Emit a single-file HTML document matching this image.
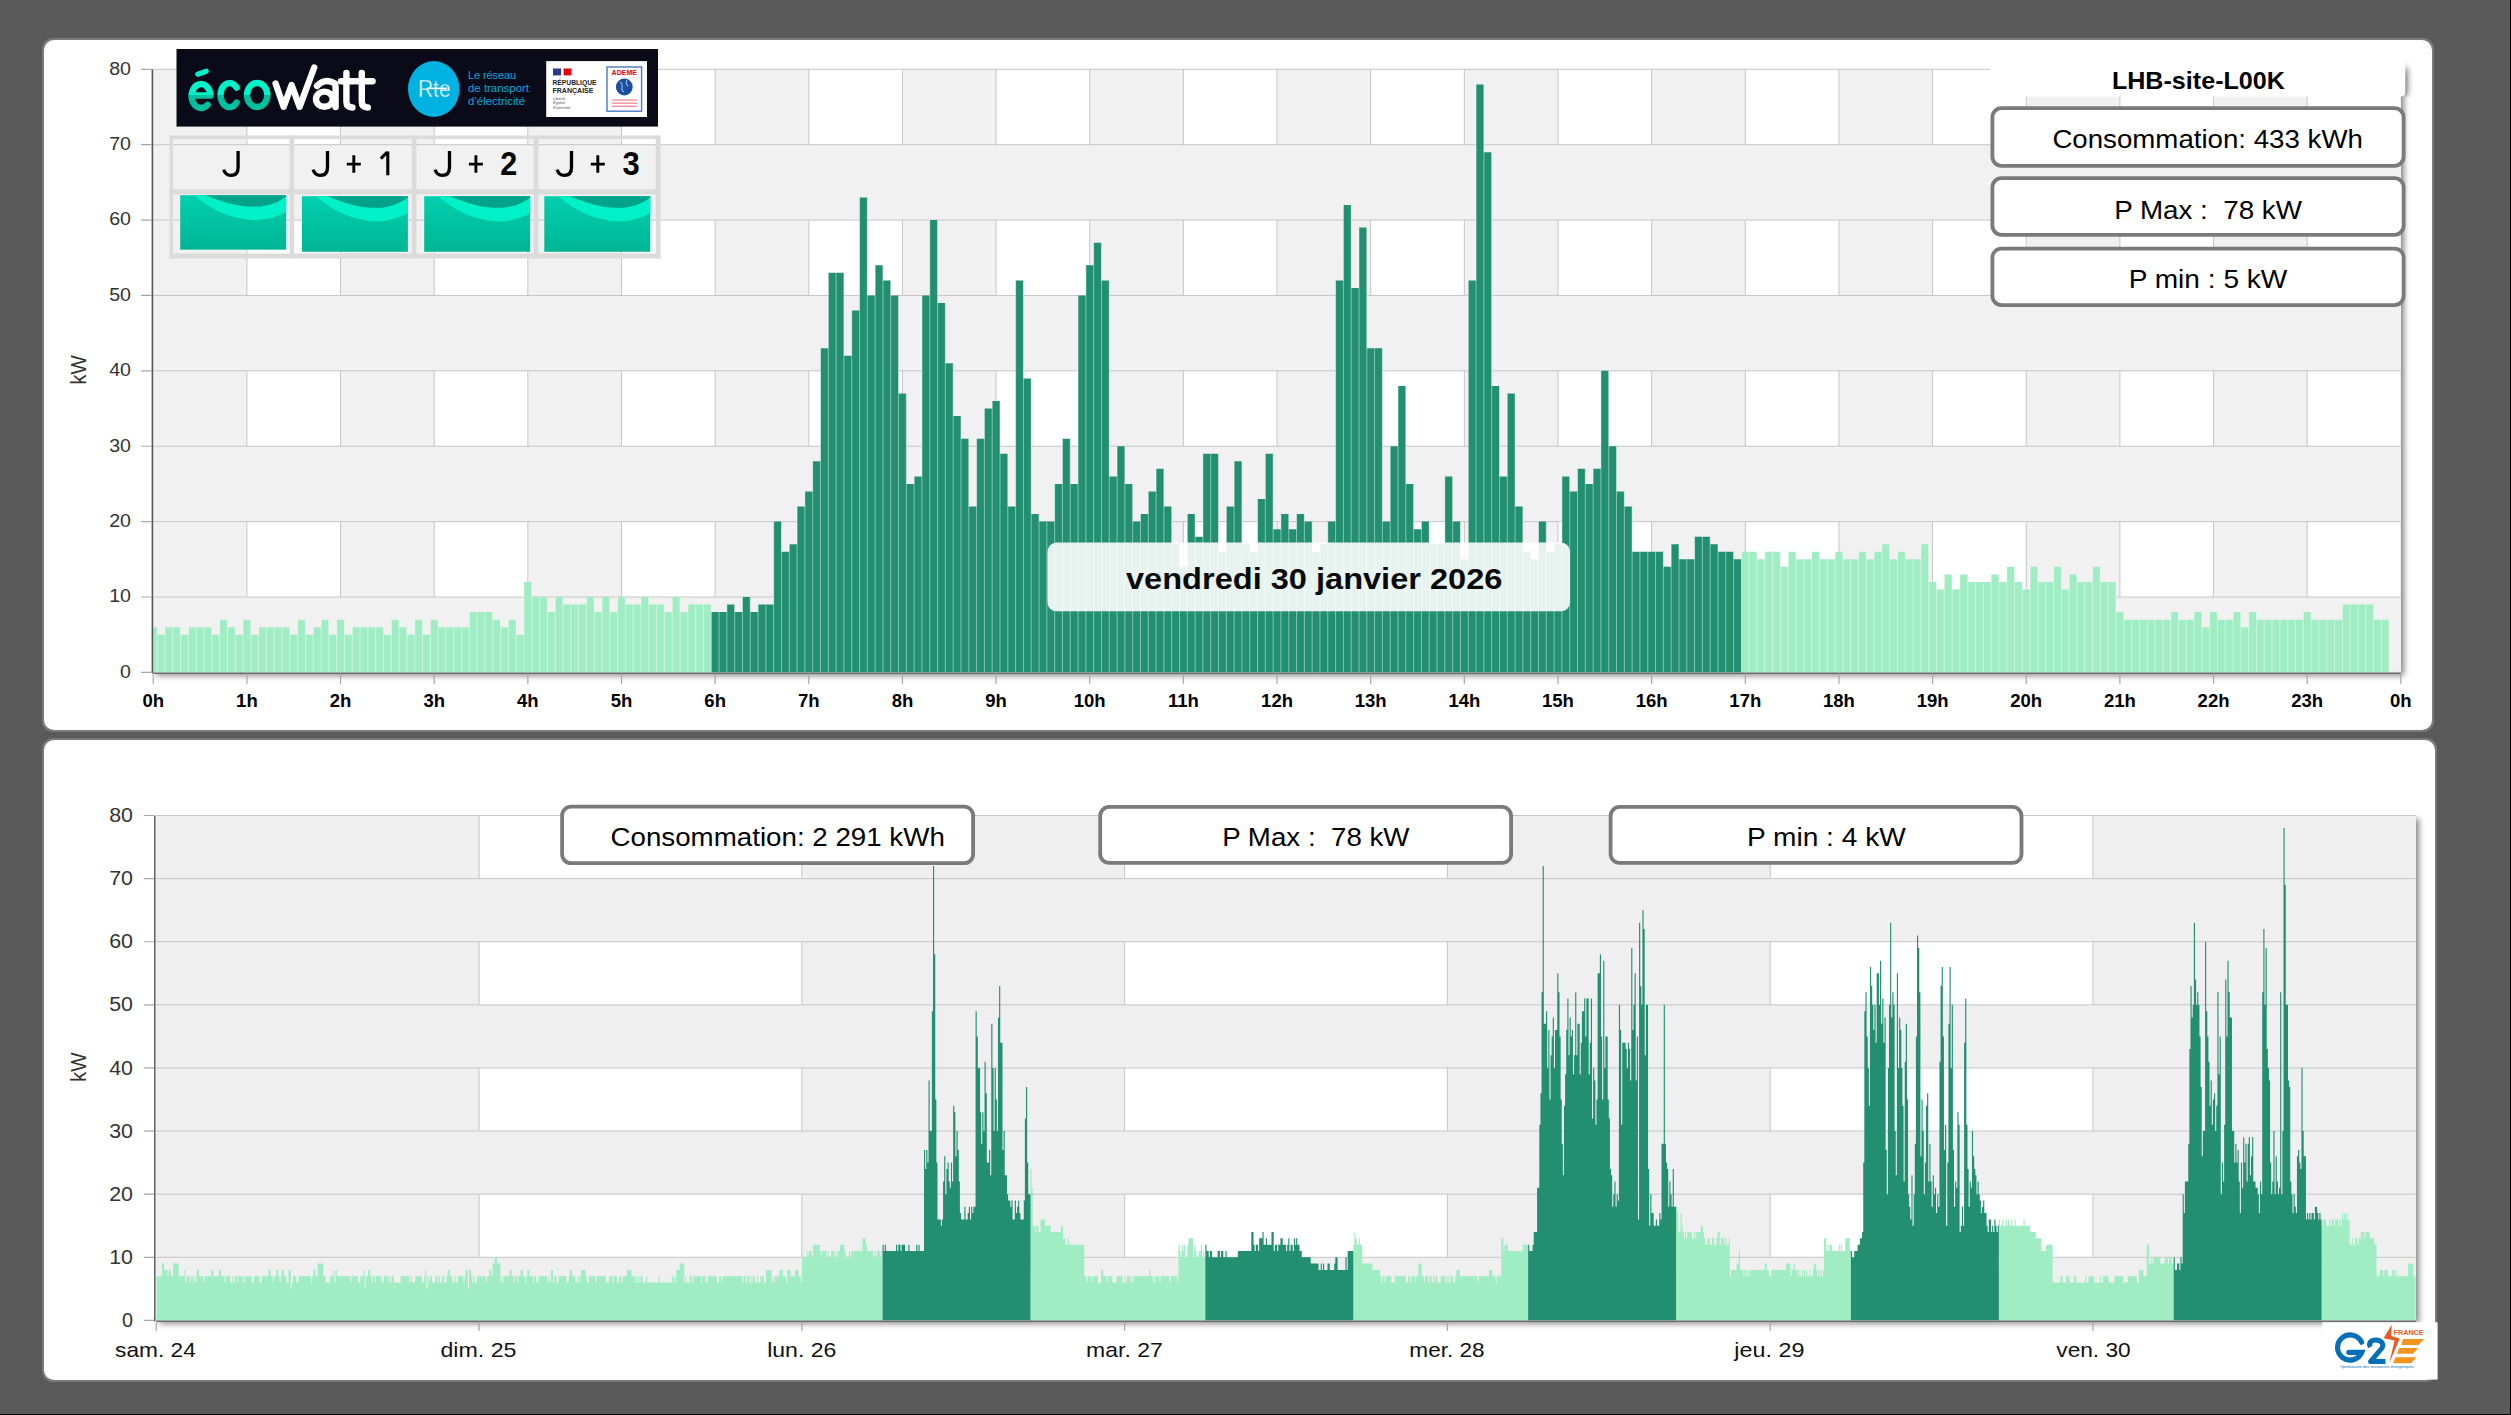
<!DOCTYPE html><html><head><meta charset="utf-8"><style>html,body{margin:0;padding:0;background:#5a5a5a;width:2511px;height:1415px;overflow:hidden}svg{display:block}text{font-family:'Liberation Sans',sans-serif}</style></head><body>
<svg width="2511" height="1415" viewBox="0 0 2511 1415">
<defs>
<filter id="sh" x="-5%" y="-5%" width="110%" height="110%"><feGaussianBlur stdDeviation="3.2"/></filter>
<filter id="sh2" x="-10%" y="-60%" width="120%" height="220%"><feGaussianBlur stdDeviation="3.2"/></filter>
<clipPath id="c1"><rect x="153.25" y="69.3" width="2247.6" height="603.1"/></clipPath>
<clipPath id="c2"><rect x="156.3" y="815.5" width="2259.46" height="504.9"/></clipPath>
<linearGradient id="eco" x1="0" y1="0" x2="0" y2="1"><stop offset="0" stop-color="#00f2c9"/><stop offset="0.58" stop-color="#00f2c9"/><stop offset="0.58" stop-color="#00c2a2"/><stop offset="1" stop-color="#00c2a2"/></linearGradient>
<linearGradient id="wavebg" x1="0" y1="0" x2="0" y2="1"><stop offset="0" stop-color="#00d0ae"/><stop offset="1" stop-color="#00b594"/></linearGradient>
</defs>
<rect x="0" y="0" width="2511" height="1415" fill="#5a5a5a"/>
<rect x="2510" y="0" width="1" height="1415" fill="#000"/>
<rect x="0" y="1414" width="2511" height="1" fill="#000"/>
<rect x="42" y="38" width="2392" height="694" rx="11" fill="#7a7a7a"/>
<rect x="44" y="40" width="2388" height="690" rx="10" fill="#fff"/>
<rect x="42" y="738" width="2395" height="644" rx="11" fill="#7a7a7a"/>
<rect x="44" y="740" width="2391" height="640" rx="10" fill="#fff"/>
<clipPath id="sc1"><rect x="153.25" y="69.3" width="2272.6" height="628.1"/></clipPath>
<g clip-path="url(#sc1)"><rect x="156.25" y="72.3" width="2247.6" height="603.1" fill="#000" opacity="0.5" filter="url(#sh)"/></g>
<rect x="153.25" y="69.3" width="2247.6" height="603.1" fill="#fff"/>
<rect x="153.25" y="69.3" width="93.65" height="603.1" fill="#f1f1f1"/>
<rect x="340.55" y="69.3" width="93.65" height="603.1" fill="#f1f1f1"/>
<rect x="527.85" y="69.3" width="93.65" height="603.1" fill="#f1f1f1"/>
<rect x="715.15" y="69.3" width="93.65" height="603.1" fill="#f1f1f1"/>
<rect x="902.45" y="69.3" width="93.65" height="603.1" fill="#f1f1f1"/>
<rect x="1089.75" y="69.3" width="93.65" height="603.1" fill="#f1f1f1"/>
<rect x="1277.05" y="69.3" width="93.65" height="603.1" fill="#f1f1f1"/>
<rect x="1464.35" y="69.3" width="93.65" height="603.1" fill="#f1f1f1"/>
<rect x="1651.65" y="69.3" width="93.65" height="603.1" fill="#f1f1f1"/>
<rect x="1838.95" y="69.3" width="93.65" height="603.1" fill="#f1f1f1"/>
<rect x="2026.25" y="69.3" width="93.65" height="603.1" fill="#f1f1f1"/>
<rect x="2213.55" y="69.3" width="93.65" height="603.1" fill="#f1f1f1"/>
<path d="M246.9 69.3V672.4M340.55 69.3V672.4M434.2 69.3V672.4M527.85 69.3V672.4M621.5 69.3V672.4M715.15 69.3V672.4M808.8 69.3V672.4M902.45 69.3V672.4M996.1 69.3V672.4M1089.75 69.3V672.4M1183.4 69.3V672.4M1277.05 69.3V672.4M1370.7 69.3V672.4M1464.35 69.3V672.4M1558 69.3V672.4M1651.65 69.3V672.4M1745.3 69.3V672.4M1838.95 69.3V672.4M1932.6 69.3V672.4M2026.25 69.3V672.4M2119.9 69.3V672.4M2213.55 69.3V672.4M2307.2 69.3V672.4" stroke="#c6c6c6" stroke-width="1" fill="none"/>
<rect x="153.25" y="597.01" width="2247.6" height="75.39" fill="#f1f1f1"/>
<rect x="153.25" y="446.24" width="2247.6" height="75.39" fill="#f1f1f1"/>
<rect x="153.25" y="295.46" width="2247.6" height="75.39" fill="#f1f1f1"/>
<rect x="153.25" y="144.69" width="2247.6" height="75.39" fill="#f1f1f1"/>
<path d="M153.25 672.4H2400.85M153.25 597.01H2400.85M153.25 521.62H2400.85M153.25 446.24H2400.85M153.25 370.85H2400.85M153.25 295.46H2400.85M153.25 220.07H2400.85M153.25 144.69H2400.85M153.25 69.3H2400.85" stroke="#c6c6c6" stroke-width="1" fill="none"/>
<g clip-path="url(#c1)">
<path d="M149.35 672.4h7.8v-45.23h-7.8zM157.15 672.4h7.8v-37.69h-7.8zM164.96 672.4h7.8v-45.23h-7.8zM172.76 672.4h7.8v-45.23h-7.8zM180.56 672.4h7.8v-37.69h-7.8zM188.37 672.4h7.8v-45.23h-7.8zM196.17 672.4h7.8v-45.23h-7.8zM203.98 672.4h7.8v-45.23h-7.8zM211.78 672.4h7.8v-37.69h-7.8zM219.59 672.4h7.8v-52.77h-7.8zM227.39 672.4h7.8v-45.23h-7.8zM235.19 672.4h7.8v-37.69h-7.8zM243 672.4h7.8v-52.77h-7.8zM250.8 672.4h7.8v-37.69h-7.8zM258.61 672.4h7.8v-45.23h-7.8zM266.41 672.4h7.8v-45.23h-7.8zM274.21 672.4h7.8v-45.23h-7.8zM282.02 672.4h7.8v-45.23h-7.8zM289.82 672.4h7.8v-37.69h-7.8zM297.63 672.4h7.8v-52.77h-7.8zM305.43 672.4h7.8v-37.69h-7.8zM313.24 672.4h7.8v-45.23h-7.8zM321.04 672.4h7.8v-52.77h-7.8zM328.84 672.4h7.8v-37.69h-7.8zM336.65 672.4h7.8v-52.77h-7.8zM344.45 672.4h7.8v-37.69h-7.8zM352.26 672.4h7.8v-45.23h-7.8zM360.06 672.4h7.8v-45.23h-7.8zM367.86 672.4h7.8v-45.23h-7.8zM375.67 672.4h7.8v-45.23h-7.8zM383.47 672.4h7.8v-37.69h-7.8zM391.28 672.4h7.8v-52.77h-7.8zM399.08 672.4h7.8v-45.23h-7.8zM406.89 672.4h7.8v-37.69h-7.8zM414.69 672.4h7.8v-52.77h-7.8zM422.49 672.4h7.8v-37.69h-7.8zM430.3 672.4h7.8v-52.77h-7.8zM438.1 672.4h7.8v-45.23h-7.8zM445.91 672.4h7.8v-45.23h-7.8zM453.71 672.4h7.8v-45.23h-7.8zM461.51 672.4h7.8v-45.23h-7.8zM469.32 672.4h7.8v-60.31h-7.8zM477.12 672.4h7.8v-60.31h-7.8zM484.93 672.4h7.8v-60.31h-7.8zM492.73 672.4h7.8v-52.77h-7.8zM500.54 672.4h7.8v-45.23h-7.8zM508.34 672.4h7.8v-52.77h-7.8zM516.14 672.4h7.8v-37.69h-7.8zM523.95 672.4h7.8v-90.47h-7.8zM531.75 672.4h7.8v-75.39h-7.8zM539.56 672.4h7.8v-75.39h-7.8zM547.36 672.4h7.8v-60.31h-7.8zM555.16 672.4h7.8v-75.39h-7.8zM562.97 672.4h7.8v-67.85h-7.8zM570.77 672.4h7.8v-67.85h-7.8zM578.58 672.4h7.8v-67.85h-7.8zM586.38 672.4h7.8v-75.39h-7.8zM594.19 672.4h7.8v-60.31h-7.8zM601.99 672.4h7.8v-75.39h-7.8zM609.79 672.4h7.8v-60.31h-7.8zM617.6 672.4h7.8v-75.39h-7.8zM625.4 672.4h7.8v-67.85h-7.8zM633.21 672.4h7.8v-67.85h-7.8zM641.01 672.4h7.8v-75.39h-7.8zM648.81 672.4h7.8v-67.85h-7.8zM656.62 672.4h7.8v-67.85h-7.8zM664.42 672.4h7.8v-60.31h-7.8zM672.23 672.4h7.8v-75.39h-7.8zM680.03 672.4h7.8v-60.31h-7.8zM687.84 672.4h7.8v-67.85h-7.8zM695.64 672.4h7.8v-67.85h-7.8zM703.44 672.4h7.8v-67.85h-7.8zM1741.4 672.4h7.8v-120.62h-7.8zM1749.2 672.4h7.8v-120.62h-7.8zM1757.01 672.4h7.8v-113.08h-7.8zM1764.81 672.4h7.8v-120.62h-7.8zM1772.61 672.4h7.8v-120.62h-7.8zM1780.42 672.4h7.8v-105.54h-7.8zM1788.22 672.4h7.8v-120.62h-7.8zM1796.03 672.4h7.8v-113.08h-7.8zM1803.83 672.4h7.8v-113.08h-7.8zM1811.64 672.4h7.8v-120.62h-7.8zM1819.44 672.4h7.8v-113.08h-7.8zM1827.24 672.4h7.8v-113.08h-7.8zM1835.05 672.4h7.8v-120.62h-7.8zM1842.85 672.4h7.8v-113.08h-7.8zM1850.66 672.4h7.8v-113.08h-7.8zM1858.46 672.4h7.8v-120.62h-7.8zM1866.26 672.4h7.8v-113.08h-7.8zM1874.07 672.4h7.8v-120.62h-7.8zM1881.87 672.4h7.8v-128.16h-7.8zM1889.68 672.4h7.8v-113.08h-7.8zM1897.48 672.4h7.8v-120.62h-7.8zM1905.29 672.4h7.8v-113.08h-7.8zM1913.09 672.4h7.8v-113.08h-7.8zM1920.89 672.4h7.8v-128.16h-7.8zM1928.7 672.4h7.8v-90.47h-7.8zM1936.5 672.4h7.8v-82.93h-7.8zM1944.31 672.4h7.8v-98h-7.8zM1952.11 672.4h7.8v-82.93h-7.8zM1959.91 672.4h7.8v-98h-7.8zM1967.72 672.4h7.8v-90.47h-7.8zM1975.52 672.4h7.8v-90.47h-7.8zM1983.33 672.4h7.8v-90.47h-7.8zM1991.13 672.4h7.8v-98h-7.8zM1998.94 672.4h7.8v-90.47h-7.8zM2006.74 672.4h7.8v-105.54h-7.8zM2014.54 672.4h7.8v-90.47h-7.8zM2022.35 672.4h7.8v-82.93h-7.8zM2030.15 672.4h7.8v-105.54h-7.8zM2037.96 672.4h7.8v-90.47h-7.8zM2045.76 672.4h7.8v-90.47h-7.8zM2053.56 672.4h7.8v-105.54h-7.8zM2061.37 672.4h7.8v-82.93h-7.8zM2069.17 672.4h7.8v-98h-7.8zM2076.98 672.4h7.8v-90.47h-7.8zM2084.78 672.4h7.8v-90.47h-7.8zM2092.59 672.4h7.8v-105.54h-7.8zM2100.39 672.4h7.8v-90.47h-7.8zM2108.19 672.4h7.8v-90.47h-7.8zM2116 672.4h7.8v-60.31h-7.8zM2123.8 672.4h7.8v-52.77h-7.8zM2131.61 672.4h7.8v-52.77h-7.8zM2139.41 672.4h7.8v-52.77h-7.8zM2147.21 672.4h7.8v-52.77h-7.8zM2155.02 672.4h7.8v-52.77h-7.8zM2162.82 672.4h7.8v-52.77h-7.8zM2170.63 672.4h7.8v-60.31h-7.8zM2178.43 672.4h7.8v-52.77h-7.8zM2186.24 672.4h7.8v-52.77h-7.8zM2194.04 672.4h7.8v-60.31h-7.8zM2201.84 672.4h7.8v-45.23h-7.8zM2209.65 672.4h7.8v-60.31h-7.8zM2217.45 672.4h7.8v-52.77h-7.8zM2225.26 672.4h7.8v-52.77h-7.8zM2233.06 672.4h7.8v-60.31h-7.8zM2240.86 672.4h7.8v-45.23h-7.8zM2248.67 672.4h7.8v-60.31h-7.8zM2256.47 672.4h7.8v-52.77h-7.8zM2264.28 672.4h7.8v-52.77h-7.8zM2272.08 672.4h7.8v-52.77h-7.8zM2279.89 672.4h7.8v-52.77h-7.8zM2287.69 672.4h7.8v-52.77h-7.8zM2295.49 672.4h7.8v-52.77h-7.8zM2303.3 672.4h7.8v-60.31h-7.8zM2311.1 672.4h7.8v-52.77h-7.8zM2318.91 672.4h7.8v-52.77h-7.8zM2326.71 672.4h7.8v-52.77h-7.8zM2334.51 672.4h7.8v-52.77h-7.8zM2342.32 672.4h7.8v-67.85h-7.8zM2350.12 672.4h7.8v-67.85h-7.8zM2357.93 672.4h7.8v-67.85h-7.8zM2365.73 672.4h7.8v-67.85h-7.8zM2373.54 672.4h7.8v-52.77h-7.8zM2381.34 672.4h7.8v-52.77h-7.8z" fill="#a0edc3"/>
<path d="M711.25 672.4h7.8v-60.31h-7.8zM719.05 672.4h7.8v-60.31h-7.8zM726.86 672.4h7.8v-67.85h-7.8zM734.66 672.4h7.8v-60.31h-7.8zM742.46 672.4h7.8v-75.39h-7.8zM750.27 672.4h7.8v-60.31h-7.8zM758.07 672.4h7.8v-67.85h-7.8zM765.88 672.4h7.8v-67.85h-7.8zM773.68 672.4h7.8v-150.78h-7.8zM781.49 672.4h7.8v-120.62h-7.8zM789.29 672.4h7.8v-128.16h-7.8zM797.09 672.4h7.8v-165.85h-7.8zM804.9 672.4h7.8v-180.93h-7.8zM812.7 672.4h7.8v-211.09h-7.8zM820.51 672.4h7.8v-324.17h-7.8zM828.31 672.4h7.8v-399.55h-7.8zM836.11 672.4h7.8v-399.55h-7.8zM843.92 672.4h7.8v-316.63h-7.8zM851.72 672.4h7.8v-361.86h-7.8zM859.53 672.4h7.8v-474.94h-7.8zM867.33 672.4h7.8v-376.94h-7.8zM875.14 672.4h7.8v-407.09h-7.8zM882.94 672.4h7.8v-392.01h-7.8zM890.74 672.4h7.8v-376.94h-7.8zM898.55 672.4h7.8v-278.93h-7.8zM906.35 672.4h7.8v-188.47h-7.8zM914.16 672.4h7.8v-196.01h-7.8zM921.96 672.4h7.8v-376.94h-7.8zM929.76 672.4h7.8v-452.33h-7.8zM937.57 672.4h7.8v-369.4h-7.8zM945.37 672.4h7.8v-309.09h-7.8zM953.18 672.4h7.8v-256.32h-7.8zM960.98 672.4h7.8v-233.7h-7.8zM968.79 672.4h7.8v-165.85h-7.8zM976.59 672.4h7.8v-233.7h-7.8zM984.39 672.4h7.8v-263.86h-7.8zM992.2 672.4h7.8v-271.39h-7.8zM1000 672.4h7.8v-218.62h-7.8zM1007.81 672.4h7.8v-165.85h-7.8zM1015.61 672.4h7.8v-392.01h-7.8zM1023.41 672.4h7.8v-294.01h-7.8zM1031.22 672.4h7.8v-158.31h-7.8zM1039.02 672.4h7.8v-150.78h-7.8zM1046.83 672.4h7.8v-150.78h-7.8zM1054.63 672.4h7.8v-188.47h-7.8zM1062.44 672.4h7.8v-233.7h-7.8zM1070.24 672.4h7.8v-188.47h-7.8zM1078.04 672.4h7.8v-376.94h-7.8zM1085.85 672.4h7.8v-407.09h-7.8zM1093.65 672.4h7.8v-429.71h-7.8zM1101.46 672.4h7.8v-392.01h-7.8zM1109.26 672.4h7.8v-196.01h-7.8zM1117.06 672.4h7.8v-226.16h-7.8zM1124.87 672.4h7.8v-188.47h-7.8zM1132.67 672.4h7.8v-150.78h-7.8zM1140.48 672.4h7.8v-158.31h-7.8zM1148.28 672.4h7.8v-180.93h-7.8zM1156.09 672.4h7.8v-203.55h-7.8zM1163.89 672.4h7.8v-165.85h-7.8zM1171.69 672.4h7.8v-128.16h-7.8zM1179.5 672.4h7.8v-105.54h-7.8zM1187.3 672.4h7.8v-158.31h-7.8zM1195.11 672.4h7.8v-135.7h-7.8zM1202.91 672.4h7.8v-218.62h-7.8zM1210.71 672.4h7.8v-218.62h-7.8zM1218.52 672.4h7.8v-120.62h-7.8zM1226.32 672.4h7.8v-165.85h-7.8zM1234.13 672.4h7.8v-211.09h-7.8zM1241.93 672.4h7.8v-128.16h-7.8zM1249.74 672.4h7.8v-120.62h-7.8zM1257.54 672.4h7.8v-173.39h-7.8zM1265.34 672.4h7.8v-218.62h-7.8zM1273.15 672.4h7.8v-143.24h-7.8zM1280.95 672.4h7.8v-158.31h-7.8zM1288.76 672.4h7.8v-143.24h-7.8zM1296.56 672.4h7.8v-158.31h-7.8zM1304.36 672.4h7.8v-150.78h-7.8zM1312.17 672.4h7.8v-120.62h-7.8zM1319.97 672.4h7.8v-128.16h-7.8zM1327.78 672.4h7.8v-150.78h-7.8zM1335.58 672.4h7.8v-392.01h-7.8zM1343.39 672.4h7.8v-467.4h-7.8zM1351.19 672.4h7.8v-384.48h-7.8zM1358.99 672.4h7.8v-444.79h-7.8zM1366.8 672.4h7.8v-324.17h-7.8zM1374.6 672.4h7.8v-324.17h-7.8zM1382.41 672.4h7.8v-150.78h-7.8zM1390.21 672.4h7.8v-226.16h-7.8zM1398.01 672.4h7.8v-286.47h-7.8zM1405.82 672.4h7.8v-188.47h-7.8zM1413.62 672.4h7.8v-143.24h-7.8zM1421.43 672.4h7.8v-150.78h-7.8zM1429.23 672.4h7.8v-128.16h-7.8zM1437.04 672.4h7.8v-128.16h-7.8zM1444.84 672.4h7.8v-196.01h-7.8zM1452.64 672.4h7.8v-150.78h-7.8zM1460.45 672.4h7.8v-113.08h-7.8zM1468.25 672.4h7.8v-392.01h-7.8zM1476.06 672.4h7.8v-588.02h-7.8zM1483.86 672.4h7.8v-520.17h-7.8zM1491.66 672.4h7.8v-286.47h-7.8zM1499.47 672.4h7.8v-196.01h-7.8zM1507.27 672.4h7.8v-278.93h-7.8zM1515.08 672.4h7.8v-165.85h-7.8zM1522.88 672.4h7.8v-120.62h-7.8zM1530.69 672.4h7.8v-113.08h-7.8zM1538.49 672.4h7.8v-150.78h-7.8zM1546.29 672.4h7.8v-120.62h-7.8zM1554.1 672.4h7.8v-128.16h-7.8zM1561.9 672.4h7.8v-196.01h-7.8zM1569.71 672.4h7.8v-180.93h-7.8zM1577.51 672.4h7.8v-203.55h-7.8zM1585.31 672.4h7.8v-188.47h-7.8zM1593.12 672.4h7.8v-203.55h-7.8zM1600.92 672.4h7.8v-301.55h-7.8zM1608.73 672.4h7.8v-226.16h-7.8zM1616.53 672.4h7.8v-180.93h-7.8zM1624.34 672.4h7.8v-165.85h-7.8zM1632.14 672.4h7.8v-120.62h-7.8zM1639.94 672.4h7.8v-120.62h-7.8zM1647.75 672.4h7.8v-120.62h-7.8zM1655.55 672.4h7.8v-120.62h-7.8zM1663.36 672.4h7.8v-105.54h-7.8zM1671.16 672.4h7.8v-128.16h-7.8zM1678.96 672.4h7.8v-113.08h-7.8zM1686.77 672.4h7.8v-113.08h-7.8zM1694.57 672.4h7.8v-135.7h-7.8zM1702.38 672.4h7.8v-135.7h-7.8zM1710.18 672.4h7.8v-128.16h-7.8zM1717.99 672.4h7.8v-120.62h-7.8zM1725.79 672.4h7.8v-120.62h-7.8zM1733.59 672.4h7.8v-113.08h-7.8z" fill="#228f70"/>
<path d="M157.15 672.4v-45.23M164.96 672.4v-45.23M172.76 672.4v-45.23M180.56 672.4v-45.23M188.37 672.4v-45.23M196.17 672.4v-45.23M203.98 672.4v-45.23M211.78 672.4v-45.23M219.59 672.4v-52.77M227.39 672.4v-52.77M235.19 672.4v-45.23M243 672.4v-52.77M250.8 672.4v-52.77M258.61 672.4v-45.23M266.41 672.4v-45.23M274.21 672.4v-45.23M282.02 672.4v-45.23M289.82 672.4v-45.23M297.63 672.4v-52.77M305.43 672.4v-52.77M313.24 672.4v-45.23M321.04 672.4v-52.77M328.84 672.4v-52.77M336.65 672.4v-52.77M344.45 672.4v-52.77M352.26 672.4v-45.23M360.06 672.4v-45.23M367.86 672.4v-45.23M375.67 672.4v-45.23M383.47 672.4v-45.23M391.28 672.4v-52.77M399.08 672.4v-52.77M406.89 672.4v-45.23M414.69 672.4v-52.77M422.49 672.4v-52.77M430.3 672.4v-52.77M438.1 672.4v-52.77M445.91 672.4v-45.23M453.71 672.4v-45.23M461.51 672.4v-45.23M469.32 672.4v-60.31M477.12 672.4v-60.31M484.93 672.4v-60.31M492.73 672.4v-60.31M500.54 672.4v-52.77M508.34 672.4v-52.77M516.14 672.4v-52.77M523.95 672.4v-90.47M531.75 672.4v-90.47M539.56 672.4v-75.39M547.36 672.4v-75.39M555.16 672.4v-75.39M562.97 672.4v-75.39M570.77 672.4v-67.85M578.58 672.4v-67.85M586.38 672.4v-75.39M594.19 672.4v-75.39M601.99 672.4v-75.39M609.79 672.4v-75.39M617.6 672.4v-75.39M625.4 672.4v-75.39M633.21 672.4v-67.85M641.01 672.4v-75.39M648.81 672.4v-75.39M656.62 672.4v-67.85M664.42 672.4v-67.85M672.23 672.4v-75.39M680.03 672.4v-75.39M687.84 672.4v-67.85M695.64 672.4v-67.85M703.44 672.4v-67.85M711.25 672.4v-67.85M1749.2 672.4v-120.62M1757.01 672.4v-120.62M1764.81 672.4v-120.62M1772.61 672.4v-120.62M1780.42 672.4v-120.62M1788.22 672.4v-120.62M1796.03 672.4v-120.62M1803.83 672.4v-113.08M1811.64 672.4v-120.62M1819.44 672.4v-120.62M1827.24 672.4v-113.08M1835.05 672.4v-120.62M1842.85 672.4v-120.62M1850.66 672.4v-113.08M1858.46 672.4v-120.62M1866.26 672.4v-120.62M1874.07 672.4v-120.62M1881.87 672.4v-128.16M1889.68 672.4v-128.16M1897.48 672.4v-120.62M1905.29 672.4v-120.62M1913.09 672.4v-113.08M1920.89 672.4v-128.16M1928.7 672.4v-128.16M1936.5 672.4v-90.47M1944.31 672.4v-98M1952.11 672.4v-98M1959.91 672.4v-98M1967.72 672.4v-98M1975.52 672.4v-90.47M1983.33 672.4v-90.47M1991.13 672.4v-98M1998.94 672.4v-98M2006.74 672.4v-105.54M2014.54 672.4v-105.54M2022.35 672.4v-90.47M2030.15 672.4v-105.54M2037.96 672.4v-105.54M2045.76 672.4v-90.47M2053.56 672.4v-105.54M2061.37 672.4v-105.54M2069.17 672.4v-98M2076.98 672.4v-98M2084.78 672.4v-90.47M2092.59 672.4v-105.54M2100.39 672.4v-105.54M2108.19 672.4v-90.47M2116 672.4v-90.47M2123.8 672.4v-60.31M2131.61 672.4v-52.77M2139.41 672.4v-52.77M2147.21 672.4v-52.77M2155.02 672.4v-52.77M2162.82 672.4v-52.77M2170.63 672.4v-60.31M2178.43 672.4v-60.31M2186.24 672.4v-52.77M2194.04 672.4v-60.31M2201.84 672.4v-60.31M2209.65 672.4v-60.31M2217.45 672.4v-60.31M2225.26 672.4v-52.77M2233.06 672.4v-60.31M2240.86 672.4v-60.31M2248.67 672.4v-60.31M2256.47 672.4v-60.31M2264.28 672.4v-52.77M2272.08 672.4v-52.77M2279.89 672.4v-52.77M2287.69 672.4v-52.77M2295.49 672.4v-52.77M2303.3 672.4v-60.31M2311.1 672.4v-60.31M2318.91 672.4v-52.77M2326.71 672.4v-52.77M2334.51 672.4v-52.77M2342.32 672.4v-67.85M2350.12 672.4v-67.85M2357.93 672.4v-67.85M2365.73 672.4v-67.85M2373.54 672.4v-67.85M2381.34 672.4v-52.77M2389.14 672.4v-52.77M719.05 672.4v-60.31M726.86 672.4v-67.85M734.66 672.4v-67.85M742.46 672.4v-75.39M750.27 672.4v-75.39M758.07 672.4v-67.85M765.88 672.4v-67.85M773.68 672.4v-150.78M781.49 672.4v-150.78M789.29 672.4v-128.16M797.09 672.4v-165.85M804.9 672.4v-180.93M812.7 672.4v-211.09M820.51 672.4v-324.17M828.31 672.4v-399.55M836.11 672.4v-399.55M843.92 672.4v-399.55M851.72 672.4v-361.86M859.53 672.4v-474.94M867.33 672.4v-474.94M875.14 672.4v-407.09M882.94 672.4v-407.09M890.74 672.4v-392.01M898.55 672.4v-376.94M906.35 672.4v-278.93M914.16 672.4v-196.01M921.96 672.4v-376.94M929.76 672.4v-452.33M937.57 672.4v-452.33M945.37 672.4v-369.4M953.18 672.4v-309.09M960.98 672.4v-256.32M968.79 672.4v-233.7M976.59 672.4v-233.7M984.39 672.4v-263.86M992.2 672.4v-271.39M1000 672.4v-271.39M1007.81 672.4v-218.62M1015.61 672.4v-392.01M1023.41 672.4v-392.01M1031.22 672.4v-294.01M1039.02 672.4v-158.31M1046.83 672.4v-150.78M1054.63 672.4v-188.47M1062.44 672.4v-233.7M1070.24 672.4v-233.7M1078.04 672.4v-376.94M1085.85 672.4v-407.09M1093.65 672.4v-429.71M1101.46 672.4v-429.71M1109.26 672.4v-392.01M1117.06 672.4v-226.16M1124.87 672.4v-226.16M1132.67 672.4v-188.47M1140.48 672.4v-158.31M1148.28 672.4v-180.93M1156.09 672.4v-203.55M1163.89 672.4v-203.55M1171.69 672.4v-165.85M1179.5 672.4v-128.16M1187.3 672.4v-158.31M1195.11 672.4v-158.31M1202.91 672.4v-218.62M1210.71 672.4v-218.62M1218.52 672.4v-218.62M1226.32 672.4v-165.85M1234.13 672.4v-211.09M1241.93 672.4v-211.09M1249.74 672.4v-128.16M1257.54 672.4v-173.39M1265.34 672.4v-218.62M1273.15 672.4v-218.62M1280.95 672.4v-158.31M1288.76 672.4v-158.31M1296.56 672.4v-158.31M1304.36 672.4v-158.31M1312.17 672.4v-150.78M1319.97 672.4v-128.16M1327.78 672.4v-150.78M1335.58 672.4v-392.01M1343.39 672.4v-467.4M1351.19 672.4v-467.4M1358.99 672.4v-444.79M1366.8 672.4v-444.79M1374.6 672.4v-324.17M1382.41 672.4v-324.17M1390.21 672.4v-226.16M1398.01 672.4v-286.47M1405.82 672.4v-286.47M1413.62 672.4v-188.47M1421.43 672.4v-150.78M1429.23 672.4v-150.78M1437.04 672.4v-128.16M1444.84 672.4v-196.01M1452.64 672.4v-196.01M1460.45 672.4v-150.78M1468.25 672.4v-392.01M1476.06 672.4v-588.02M1483.86 672.4v-588.02M1491.66 672.4v-520.17M1499.47 672.4v-286.47M1507.27 672.4v-278.93M1515.08 672.4v-278.93M1522.88 672.4v-165.85M1530.69 672.4v-120.62M1538.49 672.4v-150.78M1546.29 672.4v-150.78M1554.1 672.4v-128.16M1561.9 672.4v-196.01M1569.71 672.4v-196.01M1577.51 672.4v-203.55M1585.31 672.4v-203.55M1593.12 672.4v-203.55M1600.92 672.4v-301.55M1608.73 672.4v-301.55M1616.53 672.4v-226.16M1624.34 672.4v-180.93M1632.14 672.4v-165.85M1639.94 672.4v-120.62M1647.75 672.4v-120.62M1655.55 672.4v-120.62M1663.36 672.4v-120.62M1671.16 672.4v-128.16M1678.96 672.4v-128.16M1686.77 672.4v-113.08M1694.57 672.4v-135.7M1702.38 672.4v-135.7M1710.18 672.4v-135.7M1717.99 672.4v-128.16M1725.79 672.4v-120.62M1733.59 672.4v-120.62M1741.4 672.4v-120.62" stroke="#fff" stroke-opacity="0.45" stroke-width="1" fill="none"/>
</g>
<clipPath id="sc2"><rect x="156.3" y="815.5" width="2284.46" height="529.9"/></clipPath>
<g clip-path="url(#sc2)"><rect x="159.3" y="818.5" width="2259.46" height="504.9" fill="#000" opacity="0.5" filter="url(#sh)"/></g>
<rect x="156.3" y="815.5" width="2259.46" height="504.9" fill="#fff"/>
<rect x="156.3" y="815.5" width="322.78" height="504.9" fill="#efefef"/>
<rect x="801.86" y="815.5" width="322.78" height="504.9" fill="#efefef"/>
<rect x="1447.42" y="815.5" width="322.78" height="504.9" fill="#efefef"/>
<rect x="2092.98" y="815.5" width="322.78" height="504.9" fill="#efefef"/>
<path d="M479.08 815.5V1320.4M801.86 815.5V1320.4M1124.64 815.5V1320.4M1447.42 815.5V1320.4M1770.2 815.5V1320.4M2092.98 815.5V1320.4" stroke="#c6c6c6" stroke-width="1" fill="none"/>
<rect x="156.3" y="1257.29" width="2259.46" height="63.11" fill="#efefef"/>
<rect x="156.3" y="1131.06" width="2259.46" height="63.11" fill="#efefef"/>
<rect x="156.3" y="1004.84" width="2259.46" height="63.11" fill="#efefef"/>
<rect x="156.3" y="878.61" width="2259.46" height="63.11" fill="#efefef"/>
<path d="M156.3 1320.4H2415.76M156.3 1257.29H2415.76M156.3 1194.18H2415.76M156.3 1131.06H2415.76M156.3 1067.95H2415.76M156.3 1004.84H2415.76M156.3 941.73H2415.76M156.3 878.61H2415.76M156.3 815.5H2415.76" stroke="#c6c6c6" stroke-width="1" fill="none"/>
<g clip-path="url(#c2)">
<path d="M156.3 1320.4h1.14v-44.18h-1.14zM157.42 1320.4h1.14v-44.18h-1.14zM158.54 1320.4h1.14v-44.18h-1.14zM159.66 1320.4h1.14v-44.18h-1.14zM160.78 1320.4h1.14v-44.18h-1.14zM161.9 1320.4h1.14v-56.8h-1.14zM163.02 1320.4h1.14v-56.8h-1.14zM164.15 1320.4h1.14v-50.49h-1.14zM165.27 1320.4h1.14v-50.49h-1.14zM166.39 1320.4h1.14v-50.49h-1.14zM167.51 1320.4h1.14v-44.18h-1.14zM168.63 1320.4h1.14v-50.49h-1.14zM169.75 1320.4h1.14v-50.49h-1.14zM170.87 1320.4h1.14v-44.18h-1.14zM171.99 1320.4h1.14v-44.18h-1.14zM173.11 1320.4h1.14v-56.8h-1.14zM174.23 1320.4h1.14v-56.8h-1.14zM175.35 1320.4h1.14v-56.8h-1.14zM176.47 1320.4h1.14v-56.8h-1.14zM177.59 1320.4h1.14v-56.8h-1.14zM178.72 1320.4h1.14v-44.18h-1.14zM179.84 1320.4h1.14v-44.18h-1.14zM180.96 1320.4h1.14v-44.18h-1.14zM182.08 1320.4h1.14v-44.18h-1.14zM183.2 1320.4h1.14v-44.18h-1.14zM184.32 1320.4h1.14v-50.49h-1.14zM185.44 1320.4h1.14v-37.87h-1.14zM186.56 1320.4h1.14v-44.18h-1.14zM187.68 1320.4h1.14v-44.18h-1.14zM188.8 1320.4h1.14v-44.18h-1.14zM189.92 1320.4h1.14v-37.87h-1.14zM191.04 1320.4h1.14v-44.18h-1.14zM192.16 1320.4h1.14v-44.18h-1.14zM193.29 1320.4h1.14v-37.87h-1.14zM194.41 1320.4h1.14v-44.18h-1.14zM195.53 1320.4h1.14v-37.87h-1.14zM196.65 1320.4h1.14v-50.49h-1.14zM197.77 1320.4h1.14v-50.49h-1.14zM198.89 1320.4h1.14v-44.18h-1.14zM200.01 1320.4h1.14v-44.18h-1.14zM201.13 1320.4h1.14v-44.18h-1.14zM202.25 1320.4h1.14v-44.18h-1.14zM203.37 1320.4h1.14v-37.87h-1.14zM204.49 1320.4h1.14v-44.18h-1.14zM205.61 1320.4h1.14v-44.18h-1.14zM206.73 1320.4h1.14v-44.18h-1.14zM207.86 1320.4h1.14v-44.18h-1.14zM208.98 1320.4h1.14v-44.18h-1.14zM210.1 1320.4h1.14v-44.18h-1.14zM211.22 1320.4h1.14v-50.49h-1.14zM212.34 1320.4h1.14v-50.49h-1.14zM213.46 1320.4h1.14v-44.18h-1.14zM214.58 1320.4h1.14v-44.18h-1.14zM215.7 1320.4h1.14v-44.18h-1.14zM216.82 1320.4h1.14v-44.18h-1.14zM217.94 1320.4h1.14v-44.18h-1.14zM219.06 1320.4h1.14v-50.49h-1.14zM220.18 1320.4h1.14v-50.49h-1.14zM221.3 1320.4h1.14v-44.18h-1.14zM222.43 1320.4h1.14v-44.18h-1.14zM223.55 1320.4h1.14v-44.18h-1.14zM224.67 1320.4h1.14v-37.87h-1.14zM225.79 1320.4h1.14v-44.18h-1.14zM226.91 1320.4h1.14v-44.18h-1.14zM228.03 1320.4h1.14v-44.18h-1.14zM229.15 1320.4h1.14v-44.18h-1.14zM230.27 1320.4h1.14v-37.87h-1.14zM231.39 1320.4h1.14v-37.87h-1.14zM232.51 1320.4h1.14v-44.18h-1.14zM233.63 1320.4h1.14v-37.87h-1.14zM234.75 1320.4h1.14v-44.18h-1.14zM235.87 1320.4h1.14v-44.18h-1.14zM237 1320.4h1.14v-37.87h-1.14zM238.12 1320.4h1.14v-44.18h-1.14zM239.24 1320.4h1.14v-44.18h-1.14zM240.36 1320.4h1.14v-44.18h-1.14zM241.48 1320.4h1.14v-44.18h-1.14zM242.6 1320.4h1.14v-37.87h-1.14zM243.72 1320.4h1.14v-44.18h-1.14zM244.84 1320.4h1.14v-37.87h-1.14zM245.96 1320.4h1.14v-44.18h-1.14zM247.08 1320.4h1.14v-44.18h-1.14zM248.2 1320.4h1.14v-44.18h-1.14zM249.32 1320.4h1.14v-44.18h-1.14zM250.44 1320.4h1.14v-44.18h-1.14zM251.56 1320.4h1.14v-37.87h-1.14zM252.69 1320.4h1.14v-37.87h-1.14zM253.81 1320.4h1.14v-44.18h-1.14zM254.93 1320.4h1.14v-44.18h-1.14zM256.05 1320.4h1.14v-44.18h-1.14zM257.17 1320.4h1.14v-44.18h-1.14zM258.29 1320.4h1.14v-44.18h-1.14zM259.41 1320.4h1.14v-37.87h-1.14zM260.53 1320.4h1.14v-37.87h-1.14zM261.65 1320.4h1.14v-44.18h-1.14zM262.77 1320.4h1.14v-44.18h-1.14zM263.89 1320.4h1.14v-44.18h-1.14zM265.01 1320.4h1.14v-44.18h-1.14zM266.13 1320.4h1.14v-44.18h-1.14zM267.26 1320.4h1.14v-44.18h-1.14zM268.38 1320.4h1.14v-50.49h-1.14zM269.5 1320.4h1.14v-50.49h-1.14zM270.62 1320.4h1.14v-44.18h-1.14zM271.74 1320.4h1.14v-44.18h-1.14zM272.86 1320.4h1.14v-37.87h-1.14zM273.98 1320.4h1.14v-44.18h-1.14zM275.1 1320.4h1.14v-44.18h-1.14zM276.22 1320.4h1.14v-50.49h-1.14zM277.34 1320.4h1.14v-50.49h-1.14zM278.46 1320.4h1.14v-44.18h-1.14zM279.58 1320.4h1.14v-37.87h-1.14zM280.7 1320.4h1.14v-44.18h-1.14zM281.83 1320.4h1.14v-50.49h-1.14zM282.95 1320.4h1.14v-50.49h-1.14zM284.07 1320.4h1.14v-44.18h-1.14zM285.19 1320.4h1.14v-44.18h-1.14zM286.31 1320.4h1.14v-37.87h-1.14zM287.43 1320.4h1.14v-37.87h-1.14zM288.55 1320.4h1.14v-50.49h-1.14zM289.67 1320.4h1.14v-50.49h-1.14zM290.79 1320.4h1.14v-31.56h-1.14zM291.91 1320.4h1.14v-37.87h-1.14zM293.03 1320.4h1.14v-44.18h-1.14zM294.15 1320.4h1.14v-44.18h-1.14zM295.27 1320.4h1.14v-44.18h-1.14zM296.4 1320.4h1.14v-37.87h-1.14zM297.52 1320.4h1.14v-37.87h-1.14zM298.64 1320.4h1.14v-44.18h-1.14zM299.76 1320.4h1.14v-44.18h-1.14zM300.88 1320.4h1.14v-44.18h-1.14zM302 1320.4h1.14v-44.18h-1.14zM303.12 1320.4h1.14v-44.18h-1.14zM304.24 1320.4h1.14v-44.18h-1.14zM305.36 1320.4h1.14v-44.18h-1.14zM306.48 1320.4h1.14v-44.18h-1.14zM307.6 1320.4h1.14v-44.18h-1.14zM308.72 1320.4h1.14v-44.18h-1.14zM309.84 1320.4h1.14v-44.18h-1.14zM310.97 1320.4h1.14v-37.87h-1.14zM312.09 1320.4h1.14v-44.18h-1.14zM313.21 1320.4h1.14v-50.49h-1.14zM314.33 1320.4h1.14v-50.49h-1.14zM315.45 1320.4h1.14v-44.18h-1.14zM316.57 1320.4h1.14v-44.18h-1.14zM317.69 1320.4h1.14v-56.8h-1.14zM318.81 1320.4h1.14v-56.8h-1.14zM319.93 1320.4h1.14v-56.8h-1.14zM321.05 1320.4h1.14v-56.8h-1.14zM322.17 1320.4h1.14v-56.8h-1.14zM323.29 1320.4h1.14v-44.18h-1.14zM324.41 1320.4h1.14v-44.18h-1.14zM325.54 1320.4h1.14v-37.87h-1.14zM326.66 1320.4h1.14v-37.87h-1.14zM327.78 1320.4h1.14v-37.87h-1.14zM328.9 1320.4h1.14v-37.87h-1.14zM330.02 1320.4h1.14v-44.18h-1.14zM331.14 1320.4h1.14v-44.18h-1.14zM332.26 1320.4h1.14v-44.18h-1.14zM333.38 1320.4h1.14v-50.49h-1.14zM334.5 1320.4h1.14v-37.87h-1.14zM335.62 1320.4h1.14v-50.49h-1.14zM336.74 1320.4h1.14v-44.18h-1.14zM337.86 1320.4h1.14v-44.18h-1.14zM338.98 1320.4h1.14v-44.18h-1.14zM340.11 1320.4h1.14v-44.18h-1.14zM341.23 1320.4h1.14v-44.18h-1.14zM342.35 1320.4h1.14v-44.18h-1.14zM343.47 1320.4h1.14v-44.18h-1.14zM344.59 1320.4h1.14v-44.18h-1.14zM345.71 1320.4h1.14v-44.18h-1.14zM346.83 1320.4h1.14v-44.18h-1.14zM347.95 1320.4h1.14v-44.18h-1.14zM349.07 1320.4h1.14v-44.18h-1.14zM350.19 1320.4h1.14v-37.87h-1.14zM351.31 1320.4h1.14v-44.18h-1.14zM352.43 1320.4h1.14v-44.18h-1.14zM353.55 1320.4h1.14v-44.18h-1.14zM354.68 1320.4h1.14v-44.18h-1.14zM355.8 1320.4h1.14v-44.18h-1.14zM356.92 1320.4h1.14v-44.18h-1.14zM358.04 1320.4h1.14v-37.87h-1.14zM359.16 1320.4h1.14v-37.87h-1.14zM360.28 1320.4h1.14v-44.18h-1.14zM361.4 1320.4h1.14v-44.18h-1.14zM362.52 1320.4h1.14v-44.18h-1.14zM363.64 1320.4h1.14v-50.49h-1.14zM364.76 1320.4h1.14v-31.56h-1.14zM365.88 1320.4h1.14v-44.18h-1.14zM367 1320.4h1.14v-44.18h-1.14zM368.12 1320.4h1.14v-50.49h-1.14zM369.25 1320.4h1.14v-50.49h-1.14zM370.37 1320.4h1.14v-44.18h-1.14zM371.49 1320.4h1.14v-37.87h-1.14zM372.61 1320.4h1.14v-44.18h-1.14zM373.73 1320.4h1.14v-44.18h-1.14zM374.85 1320.4h1.14v-37.87h-1.14zM375.97 1320.4h1.14v-44.18h-1.14zM377.09 1320.4h1.14v-44.18h-1.14zM378.21 1320.4h1.14v-44.18h-1.14zM379.33 1320.4h1.14v-44.18h-1.14zM380.45 1320.4h1.14v-44.18h-1.14zM381.57 1320.4h1.14v-37.87h-1.14zM382.69 1320.4h1.14v-37.87h-1.14zM383.82 1320.4h1.14v-44.18h-1.14zM384.94 1320.4h1.14v-44.18h-1.14zM386.06 1320.4h1.14v-44.18h-1.14zM387.18 1320.4h1.14v-44.18h-1.14zM388.3 1320.4h1.14v-37.87h-1.14zM389.42 1320.4h1.14v-44.18h-1.14zM390.54 1320.4h1.14v-37.87h-1.14zM391.66 1320.4h1.14v-44.18h-1.14zM392.78 1320.4h1.14v-44.18h-1.14zM393.9 1320.4h1.14v-37.87h-1.14zM395.02 1320.4h1.14v-37.87h-1.14zM396.14 1320.4h1.14v-37.87h-1.14zM397.26 1320.4h1.14v-37.87h-1.14zM398.38 1320.4h1.14v-37.87h-1.14zM399.51 1320.4h1.14v-37.87h-1.14zM400.63 1320.4h1.14v-44.18h-1.14zM401.75 1320.4h1.14v-44.18h-1.14zM402.87 1320.4h1.14v-44.18h-1.14zM403.99 1320.4h1.14v-44.18h-1.14zM405.11 1320.4h1.14v-44.18h-1.14zM406.23 1320.4h1.14v-44.18h-1.14zM407.35 1320.4h1.14v-44.18h-1.14zM408.47 1320.4h1.14v-44.18h-1.14zM409.59 1320.4h1.14v-37.87h-1.14zM410.71 1320.4h1.14v-44.18h-1.14zM411.83 1320.4h1.14v-37.87h-1.14zM412.95 1320.4h1.14v-37.87h-1.14zM414.08 1320.4h1.14v-37.87h-1.14zM415.2 1320.4h1.14v-44.18h-1.14zM416.32 1320.4h1.14v-44.18h-1.14zM417.44 1320.4h1.14v-44.18h-1.14zM418.56 1320.4h1.14v-44.18h-1.14zM419.68 1320.4h1.14v-44.18h-1.14zM420.8 1320.4h1.14v-44.18h-1.14zM421.92 1320.4h1.14v-37.87h-1.14zM423.04 1320.4h1.14v-37.87h-1.14zM424.16 1320.4h1.14v-44.18h-1.14zM425.28 1320.4h1.14v-50.49h-1.14zM426.4 1320.4h1.14v-31.56h-1.14zM427.52 1320.4h1.14v-44.18h-1.14zM428.65 1320.4h1.14v-37.87h-1.14zM429.77 1320.4h1.14v-44.18h-1.14zM430.89 1320.4h1.14v-44.18h-1.14zM432.01 1320.4h1.14v-37.87h-1.14zM433.13 1320.4h1.14v-37.87h-1.14zM434.25 1320.4h1.14v-37.87h-1.14zM435.37 1320.4h1.14v-44.18h-1.14zM436.49 1320.4h1.14v-44.18h-1.14zM437.61 1320.4h1.14v-37.87h-1.14zM438.73 1320.4h1.14v-44.18h-1.14zM439.85 1320.4h1.14v-37.87h-1.14zM440.97 1320.4h1.14v-37.87h-1.14zM442.09 1320.4h1.14v-44.18h-1.14zM443.22 1320.4h1.14v-44.18h-1.14zM444.34 1320.4h1.14v-37.87h-1.14zM445.46 1320.4h1.14v-37.87h-1.14zM446.58 1320.4h1.14v-44.18h-1.14zM447.7 1320.4h1.14v-50.49h-1.14zM448.82 1320.4h1.14v-50.49h-1.14zM449.94 1320.4h1.14v-44.18h-1.14zM451.06 1320.4h1.14v-44.18h-1.14zM452.18 1320.4h1.14v-37.87h-1.14zM453.3 1320.4h1.14v-37.87h-1.14zM454.42 1320.4h1.14v-44.18h-1.14zM455.54 1320.4h1.14v-37.87h-1.14zM456.66 1320.4h1.14v-37.87h-1.14zM457.79 1320.4h1.14v-44.18h-1.14zM458.91 1320.4h1.14v-44.18h-1.14zM460.03 1320.4h1.14v-44.18h-1.14zM461.15 1320.4h1.14v-44.18h-1.14zM462.27 1320.4h1.14v-44.18h-1.14zM463.39 1320.4h1.14v-37.87h-1.14zM464.51 1320.4h1.14v-44.18h-1.14zM465.63 1320.4h1.14v-50.49h-1.14zM466.75 1320.4h1.14v-50.49h-1.14zM467.87 1320.4h1.14v-31.56h-1.14zM468.99 1320.4h1.14v-50.49h-1.14zM470.11 1320.4h1.14v-50.49h-1.14zM471.23 1320.4h1.14v-44.18h-1.14zM472.36 1320.4h1.14v-37.87h-1.14zM473.48 1320.4h1.14v-44.18h-1.14zM474.6 1320.4h1.14v-37.87h-1.14zM475.72 1320.4h1.14v-37.87h-1.14zM476.84 1320.4h1.14v-44.18h-1.14zM477.96 1320.4h1.14v-44.18h-1.14zM479.08 1320.4h1.14v-44.18h-1.14zM480.2 1320.4h1.14v-44.18h-1.14zM481.32 1320.4h1.14v-44.18h-1.14zM482.44 1320.4h1.14v-44.18h-1.14zM483.56 1320.4h1.14v-44.18h-1.14zM484.68 1320.4h1.14v-44.18h-1.14zM485.8 1320.4h1.14v-37.87h-1.14zM486.93 1320.4h1.14v-44.18h-1.14zM488.05 1320.4h1.14v-44.18h-1.14zM489.17 1320.4h1.14v-50.49h-1.14zM490.29 1320.4h1.14v-50.49h-1.14zM491.41 1320.4h1.14v-44.18h-1.14zM492.53 1320.4h1.14v-56.8h-1.14zM493.65 1320.4h1.14v-56.8h-1.14zM494.77 1320.4h1.14v-63.11h-1.14zM495.89 1320.4h1.14v-63.11h-1.14zM497.01 1320.4h1.14v-56.8h-1.14zM498.13 1320.4h1.14v-56.8h-1.14zM499.25 1320.4h1.14v-56.8h-1.14zM500.37 1320.4h1.14v-37.87h-1.14zM501.5 1320.4h1.14v-44.18h-1.14zM502.62 1320.4h1.14v-37.87h-1.14zM503.74 1320.4h1.14v-44.18h-1.14zM504.86 1320.4h1.14v-44.18h-1.14zM505.98 1320.4h1.14v-44.18h-1.14zM507.1 1320.4h1.14v-44.18h-1.14zM508.22 1320.4h1.14v-44.18h-1.14zM509.34 1320.4h1.14v-50.49h-1.14zM510.46 1320.4h1.14v-50.49h-1.14zM511.58 1320.4h1.14v-44.18h-1.14zM512.7 1320.4h1.14v-44.18h-1.14zM513.82 1320.4h1.14v-37.87h-1.14zM514.94 1320.4h1.14v-44.18h-1.14zM516.07 1320.4h1.14v-44.18h-1.14zM517.19 1320.4h1.14v-37.87h-1.14zM518.31 1320.4h1.14v-44.18h-1.14zM519.43 1320.4h1.14v-44.18h-1.14zM520.55 1320.4h1.14v-50.49h-1.14zM521.67 1320.4h1.14v-50.49h-1.14zM522.79 1320.4h1.14v-44.18h-1.14zM523.91 1320.4h1.14v-44.18h-1.14zM525.03 1320.4h1.14v-37.87h-1.14zM526.15 1320.4h1.14v-44.18h-1.14zM527.27 1320.4h1.14v-50.49h-1.14zM528.39 1320.4h1.14v-50.49h-1.14zM529.51 1320.4h1.14v-44.18h-1.14zM530.64 1320.4h1.14v-44.18h-1.14zM531.76 1320.4h1.14v-44.18h-1.14zM532.88 1320.4h1.14v-37.87h-1.14zM534 1320.4h1.14v-44.18h-1.14zM535.12 1320.4h1.14v-44.18h-1.14zM536.24 1320.4h1.14v-37.87h-1.14zM537.36 1320.4h1.14v-37.87h-1.14zM538.48 1320.4h1.14v-44.18h-1.14zM539.6 1320.4h1.14v-44.18h-1.14zM540.72 1320.4h1.14v-44.18h-1.14zM541.84 1320.4h1.14v-44.18h-1.14zM542.96 1320.4h1.14v-44.18h-1.14zM544.08 1320.4h1.14v-44.18h-1.14zM545.21 1320.4h1.14v-44.18h-1.14zM546.33 1320.4h1.14v-44.18h-1.14zM547.45 1320.4h1.14v-37.87h-1.14zM548.57 1320.4h1.14v-44.18h-1.14zM549.69 1320.4h1.14v-37.87h-1.14zM550.81 1320.4h1.14v-50.49h-1.14zM551.93 1320.4h1.14v-50.49h-1.14zM553.05 1320.4h1.14v-37.87h-1.14zM554.17 1320.4h1.14v-44.18h-1.14zM555.29 1320.4h1.14v-44.18h-1.14zM556.41 1320.4h1.14v-37.87h-1.14zM557.53 1320.4h1.14v-37.87h-1.14zM558.65 1320.4h1.14v-44.18h-1.14zM559.78 1320.4h1.14v-44.18h-1.14zM560.9 1320.4h1.14v-44.18h-1.14zM562.02 1320.4h1.14v-44.18h-1.14zM563.14 1320.4h1.14v-44.18h-1.14zM564.26 1320.4h1.14v-44.18h-1.14zM565.38 1320.4h1.14v-44.18h-1.14zM566.5 1320.4h1.14v-37.87h-1.14zM567.62 1320.4h1.14v-37.87h-1.14zM568.74 1320.4h1.14v-44.18h-1.14zM569.86 1320.4h1.14v-50.49h-1.14zM570.98 1320.4h1.14v-50.49h-1.14zM572.1 1320.4h1.14v-44.18h-1.14zM573.22 1320.4h1.14v-44.18h-1.14zM574.34 1320.4h1.14v-44.18h-1.14zM575.47 1320.4h1.14v-37.87h-1.14zM576.59 1320.4h1.14v-37.87h-1.14zM577.71 1320.4h1.14v-44.18h-1.14zM578.83 1320.4h1.14v-37.87h-1.14zM579.95 1320.4h1.14v-44.18h-1.14zM581.07 1320.4h1.14v-50.49h-1.14zM582.19 1320.4h1.14v-50.49h-1.14zM583.31 1320.4h1.14v-50.49h-1.14zM584.43 1320.4h1.14v-50.49h-1.14zM585.55 1320.4h1.14v-44.18h-1.14zM586.67 1320.4h1.14v-37.87h-1.14zM587.79 1320.4h1.14v-37.87h-1.14zM588.91 1320.4h1.14v-44.18h-1.14zM590.04 1320.4h1.14v-44.18h-1.14zM591.16 1320.4h1.14v-44.18h-1.14zM592.28 1320.4h1.14v-44.18h-1.14zM593.4 1320.4h1.14v-44.18h-1.14zM594.52 1320.4h1.14v-44.18h-1.14zM595.64 1320.4h1.14v-37.87h-1.14zM596.76 1320.4h1.14v-44.18h-1.14zM597.88 1320.4h1.14v-44.18h-1.14zM599 1320.4h1.14v-44.18h-1.14zM600.12 1320.4h1.14v-44.18h-1.14zM601.24 1320.4h1.14v-44.18h-1.14zM602.36 1320.4h1.14v-44.18h-1.14zM603.48 1320.4h1.14v-44.18h-1.14zM604.61 1320.4h1.14v-44.18h-1.14zM605.73 1320.4h1.14v-37.87h-1.14zM606.85 1320.4h1.14v-37.87h-1.14zM607.97 1320.4h1.14v-37.87h-1.14zM609.09 1320.4h1.14v-44.18h-1.14zM610.21 1320.4h1.14v-44.18h-1.14zM611.33 1320.4h1.14v-44.18h-1.14zM612.45 1320.4h1.14v-37.87h-1.14zM613.57 1320.4h1.14v-44.18h-1.14zM614.69 1320.4h1.14v-44.18h-1.14zM615.81 1320.4h1.14v-44.18h-1.14zM616.93 1320.4h1.14v-37.87h-1.14zM618.05 1320.4h1.14v-37.87h-1.14zM619.18 1320.4h1.14v-44.18h-1.14zM620.3 1320.4h1.14v-44.18h-1.14zM621.42 1320.4h1.14v-37.87h-1.14zM622.54 1320.4h1.14v-44.18h-1.14zM623.66 1320.4h1.14v-44.18h-1.14zM624.78 1320.4h1.14v-44.18h-1.14zM625.9 1320.4h1.14v-44.18h-1.14zM627.02 1320.4h1.14v-50.49h-1.14zM628.14 1320.4h1.14v-50.49h-1.14zM629.26 1320.4h1.14v-50.49h-1.14zM630.38 1320.4h1.14v-50.49h-1.14zM631.5 1320.4h1.14v-44.18h-1.14zM632.62 1320.4h1.14v-44.18h-1.14zM633.75 1320.4h1.14v-44.18h-1.14zM634.87 1320.4h1.14v-37.87h-1.14zM635.99 1320.4h1.14v-44.18h-1.14zM637.11 1320.4h1.14v-37.87h-1.14zM638.23 1320.4h1.14v-44.18h-1.14zM639.35 1320.4h1.14v-37.87h-1.14zM640.47 1320.4h1.14v-44.18h-1.14zM641.59 1320.4h1.14v-44.18h-1.14zM642.71 1320.4h1.14v-37.87h-1.14zM643.83 1320.4h1.14v-37.87h-1.14zM644.95 1320.4h1.14v-37.87h-1.14zM646.07 1320.4h1.14v-44.18h-1.14zM647.19 1320.4h1.14v-37.87h-1.14zM648.32 1320.4h1.14v-37.87h-1.14zM649.44 1320.4h1.14v-37.87h-1.14zM650.56 1320.4h1.14v-37.87h-1.14zM651.68 1320.4h1.14v-37.87h-1.14zM652.8 1320.4h1.14v-37.87h-1.14zM653.92 1320.4h1.14v-37.87h-1.14zM655.04 1320.4h1.14v-37.87h-1.14zM656.16 1320.4h1.14v-37.87h-1.14zM657.28 1320.4h1.14v-37.87h-1.14zM658.4 1320.4h1.14v-44.18h-1.14zM659.52 1320.4h1.14v-37.87h-1.14zM660.64 1320.4h1.14v-37.87h-1.14zM661.76 1320.4h1.14v-37.87h-1.14zM662.89 1320.4h1.14v-37.87h-1.14zM664.01 1320.4h1.14v-37.87h-1.14zM665.13 1320.4h1.14v-37.87h-1.14zM666.25 1320.4h1.14v-37.87h-1.14zM667.37 1320.4h1.14v-37.87h-1.14zM668.49 1320.4h1.14v-37.87h-1.14zM669.61 1320.4h1.14v-37.87h-1.14zM670.73 1320.4h1.14v-37.87h-1.14zM671.85 1320.4h1.14v-44.18h-1.14zM672.97 1320.4h1.14v-37.87h-1.14zM674.09 1320.4h1.14v-44.18h-1.14zM675.21 1320.4h1.14v-37.87h-1.14zM676.33 1320.4h1.14v-50.49h-1.14zM677.46 1320.4h1.14v-50.49h-1.14zM678.58 1320.4h1.14v-50.49h-1.14zM679.7 1320.4h1.14v-56.8h-1.14zM680.82 1320.4h1.14v-56.8h-1.14zM681.94 1320.4h1.14v-56.8h-1.14zM683.06 1320.4h1.14v-56.8h-1.14zM684.18 1320.4h1.14v-37.87h-1.14zM685.3 1320.4h1.14v-44.18h-1.14zM686.42 1320.4h1.14v-37.87h-1.14zM687.54 1320.4h1.14v-37.87h-1.14zM688.66 1320.4h1.14v-37.87h-1.14zM689.78 1320.4h1.14v-44.18h-1.14zM690.9 1320.4h1.14v-44.18h-1.14zM692.03 1320.4h1.14v-37.87h-1.14zM693.15 1320.4h1.14v-44.18h-1.14zM694.27 1320.4h1.14v-44.18h-1.14zM695.39 1320.4h1.14v-44.18h-1.14zM696.51 1320.4h1.14v-44.18h-1.14zM697.63 1320.4h1.14v-44.18h-1.14zM698.75 1320.4h1.14v-44.18h-1.14zM699.87 1320.4h1.14v-44.18h-1.14zM700.99 1320.4h1.14v-37.87h-1.14zM702.11 1320.4h1.14v-44.18h-1.14zM703.23 1320.4h1.14v-44.18h-1.14zM704.35 1320.4h1.14v-44.18h-1.14zM705.47 1320.4h1.14v-37.87h-1.14zM706.6 1320.4h1.14v-37.87h-1.14zM707.72 1320.4h1.14v-44.18h-1.14zM708.84 1320.4h1.14v-44.18h-1.14zM709.96 1320.4h1.14v-44.18h-1.14zM711.08 1320.4h1.14v-44.18h-1.14zM712.2 1320.4h1.14v-44.18h-1.14zM713.32 1320.4h1.14v-44.18h-1.14zM714.44 1320.4h1.14v-44.18h-1.14zM715.56 1320.4h1.14v-44.18h-1.14zM716.68 1320.4h1.14v-37.87h-1.14zM717.8 1320.4h1.14v-37.87h-1.14zM718.92 1320.4h1.14v-44.18h-1.14zM720.04 1320.4h1.14v-44.18h-1.14zM721.16 1320.4h1.14v-37.87h-1.14zM722.29 1320.4h1.14v-44.18h-1.14zM723.41 1320.4h1.14v-44.18h-1.14zM724.53 1320.4h1.14v-44.18h-1.14zM725.65 1320.4h1.14v-44.18h-1.14zM726.77 1320.4h1.14v-44.18h-1.14zM727.89 1320.4h1.14v-44.18h-1.14zM729.01 1320.4h1.14v-44.18h-1.14zM730.13 1320.4h1.14v-44.18h-1.14zM731.25 1320.4h1.14v-44.18h-1.14zM732.37 1320.4h1.14v-44.18h-1.14zM733.49 1320.4h1.14v-44.18h-1.14zM734.61 1320.4h1.14v-44.18h-1.14zM735.73 1320.4h1.14v-44.18h-1.14zM736.86 1320.4h1.14v-44.18h-1.14zM737.98 1320.4h1.14v-44.18h-1.14zM739.1 1320.4h1.14v-44.18h-1.14zM740.22 1320.4h1.14v-44.18h-1.14zM741.34 1320.4h1.14v-44.18h-1.14zM742.46 1320.4h1.14v-37.87h-1.14zM743.58 1320.4h1.14v-44.18h-1.14zM744.7 1320.4h1.14v-44.18h-1.14zM745.82 1320.4h1.14v-37.87h-1.14zM746.94 1320.4h1.14v-44.18h-1.14zM748.06 1320.4h1.14v-44.18h-1.14zM749.18 1320.4h1.14v-37.87h-1.14zM750.3 1320.4h1.14v-44.18h-1.14zM751.43 1320.4h1.14v-37.87h-1.14zM752.55 1320.4h1.14v-44.18h-1.14zM753.67 1320.4h1.14v-44.18h-1.14zM754.79 1320.4h1.14v-37.87h-1.14zM755.91 1320.4h1.14v-37.87h-1.14zM757.03 1320.4h1.14v-44.18h-1.14zM758.15 1320.4h1.14v-37.87h-1.14zM759.27 1320.4h1.14v-37.87h-1.14zM760.39 1320.4h1.14v-44.18h-1.14zM761.51 1320.4h1.14v-44.18h-1.14zM762.63 1320.4h1.14v-44.18h-1.14zM763.75 1320.4h1.14v-37.87h-1.14zM764.87 1320.4h1.14v-37.87h-1.14zM766 1320.4h1.14v-50.49h-1.14zM767.12 1320.4h1.14v-50.49h-1.14zM768.24 1320.4h1.14v-50.49h-1.14zM769.36 1320.4h1.14v-50.49h-1.14zM770.48 1320.4h1.14v-50.49h-1.14zM771.6 1320.4h1.14v-37.87h-1.14zM772.72 1320.4h1.14v-44.18h-1.14zM773.84 1320.4h1.14v-37.87h-1.14zM774.96 1320.4h1.14v-44.18h-1.14zM776.08 1320.4h1.14v-44.18h-1.14zM777.2 1320.4h1.14v-44.18h-1.14zM778.32 1320.4h1.14v-44.18h-1.14zM779.44 1320.4h1.14v-50.49h-1.14zM780.57 1320.4h1.14v-50.49h-1.14zM781.69 1320.4h1.14v-50.49h-1.14zM782.81 1320.4h1.14v-44.18h-1.14zM783.93 1320.4h1.14v-44.18h-1.14zM785.05 1320.4h1.14v-44.18h-1.14zM786.17 1320.4h1.14v-37.87h-1.14zM787.29 1320.4h1.14v-50.49h-1.14zM788.41 1320.4h1.14v-50.49h-1.14zM789.53 1320.4h1.14v-50.49h-1.14zM790.65 1320.4h1.14v-44.18h-1.14zM791.77 1320.4h1.14v-44.18h-1.14zM792.89 1320.4h1.14v-44.18h-1.14zM794.01 1320.4h1.14v-44.18h-1.14zM795.14 1320.4h1.14v-50.49h-1.14zM796.26 1320.4h1.14v-50.49h-1.14zM797.38 1320.4h1.14v-50.49h-1.14zM798.5 1320.4h1.14v-44.18h-1.14zM799.62 1320.4h1.14v-44.18h-1.14zM800.74 1320.4h1.14v-37.87h-1.14zM801.86 1320.4h1.14v-63.11h-1.14zM802.98 1320.4h1.14v-63.11h-1.14zM804.1 1320.4h1.14v-63.11h-1.14zM805.22 1320.4h1.14v-63.11h-1.14zM806.34 1320.4h1.14v-69.42h-1.14zM807.46 1320.4h1.14v-63.11h-1.14zM808.58 1320.4h1.14v-69.42h-1.14zM809.71 1320.4h1.14v-69.42h-1.14zM810.83 1320.4h1.14v-69.42h-1.14zM811.95 1320.4h1.14v-63.11h-1.14zM813.07 1320.4h1.14v-75.74h-1.14zM814.19 1320.4h1.14v-75.74h-1.14zM815.31 1320.4h1.14v-75.74h-1.14zM816.43 1320.4h1.14v-75.74h-1.14zM817.55 1320.4h1.14v-75.74h-1.14zM818.67 1320.4h1.14v-75.74h-1.14zM819.79 1320.4h1.14v-69.42h-1.14zM820.91 1320.4h1.14v-63.11h-1.14zM822.03 1320.4h1.14v-69.42h-1.14zM823.15 1320.4h1.14v-69.42h-1.14zM824.28 1320.4h1.14v-69.42h-1.14zM825.4 1320.4h1.14v-69.42h-1.14zM826.52 1320.4h1.14v-63.11h-1.14zM827.64 1320.4h1.14v-69.42h-1.14zM828.76 1320.4h1.14v-63.11h-1.14zM829.88 1320.4h1.14v-63.11h-1.14zM831 1320.4h1.14v-69.42h-1.14zM832.12 1320.4h1.14v-69.42h-1.14zM833.24 1320.4h1.14v-69.42h-1.14zM834.36 1320.4h1.14v-63.11h-1.14zM835.48 1320.4h1.14v-69.42h-1.14zM836.6 1320.4h1.14v-63.11h-1.14zM837.72 1320.4h1.14v-69.42h-1.14zM838.85 1320.4h1.14v-69.42h-1.14zM839.97 1320.4h1.14v-75.74h-1.14zM841.09 1320.4h1.14v-75.74h-1.14zM842.21 1320.4h1.14v-75.74h-1.14zM843.33 1320.4h1.14v-75.74h-1.14zM844.45 1320.4h1.14v-69.42h-1.14zM845.57 1320.4h1.14v-63.11h-1.14zM846.69 1320.4h1.14v-63.11h-1.14zM847.81 1320.4h1.14v-63.11h-1.14zM848.93 1320.4h1.14v-69.42h-1.14zM850.05 1320.4h1.14v-63.11h-1.14zM851.17 1320.4h1.14v-69.42h-1.14zM852.29 1320.4h1.14v-69.42h-1.14zM853.42 1320.4h1.14v-69.42h-1.14zM854.54 1320.4h1.14v-69.42h-1.14zM855.66 1320.4h1.14v-69.42h-1.14zM856.78 1320.4h1.14v-69.42h-1.14zM857.9 1320.4h1.14v-69.42h-1.14zM859.02 1320.4h1.14v-69.42h-1.14zM860.14 1320.4h1.14v-69.42h-1.14zM861.26 1320.4h1.14v-69.42h-1.14zM862.38 1320.4h1.14v-82.05h-1.14zM863.5 1320.4h1.14v-82.05h-1.14zM864.62 1320.4h1.14v-82.05h-1.14zM865.74 1320.4h1.14v-75.74h-1.14zM866.86 1320.4h1.14v-69.42h-1.14zM867.99 1320.4h1.14v-69.42h-1.14zM869.11 1320.4h1.14v-69.42h-1.14zM870.23 1320.4h1.14v-69.42h-1.14zM871.35 1320.4h1.14v-69.42h-1.14zM872.47 1320.4h1.14v-69.42h-1.14zM873.59 1320.4h1.14v-63.11h-1.14zM874.71 1320.4h1.14v-69.42h-1.14zM875.83 1320.4h1.14v-63.11h-1.14zM876.95 1320.4h1.14v-69.42h-1.14zM878.07 1320.4h1.14v-69.42h-1.14zM879.19 1320.4h1.14v-69.42h-1.14zM880.31 1320.4h1.14v-63.11h-1.14zM881.43 1320.4h1.14v-69.42h-1.14zM1030.5 1320.4h1.14v-151.47h-1.14zM1031.62 1320.4h1.14v-132.54h-1.14zM1032.74 1320.4h1.14v-94.67h-1.14zM1033.86 1320.4h1.14v-94.67h-1.14zM1034.98 1320.4h1.14v-88.36h-1.14zM1036.1 1320.4h1.14v-94.67h-1.14zM1037.22 1320.4h1.14v-94.67h-1.14zM1038.34 1320.4h1.14v-88.36h-1.14zM1039.46 1320.4h1.14v-88.36h-1.14zM1040.58 1320.4h1.14v-100.98h-1.14zM1041.7 1320.4h1.14v-100.98h-1.14zM1042.82 1320.4h1.14v-100.98h-1.14zM1043.94 1320.4h1.14v-100.98h-1.14zM1045.07 1320.4h1.14v-94.67h-1.14zM1046.19 1320.4h1.14v-94.67h-1.14zM1047.31 1320.4h1.14v-94.67h-1.14zM1048.43 1320.4h1.14v-94.67h-1.14zM1049.55 1320.4h1.14v-94.67h-1.14zM1050.67 1320.4h1.14v-88.36h-1.14zM1051.79 1320.4h1.14v-88.36h-1.14zM1052.91 1320.4h1.14v-88.36h-1.14zM1054.03 1320.4h1.14v-88.36h-1.14zM1055.15 1320.4h1.14v-88.36h-1.14zM1056.27 1320.4h1.14v-88.36h-1.14zM1057.39 1320.4h1.14v-88.36h-1.14zM1058.51 1320.4h1.14v-88.36h-1.14zM1059.64 1320.4h1.14v-88.36h-1.14zM1060.76 1320.4h1.14v-94.67h-1.14zM1061.88 1320.4h1.14v-94.67h-1.14zM1063 1320.4h1.14v-82.05h-1.14zM1064.12 1320.4h1.14v-82.05h-1.14zM1065.24 1320.4h1.14v-75.74h-1.14zM1066.36 1320.4h1.14v-75.74h-1.14zM1067.48 1320.4h1.14v-82.05h-1.14zM1068.6 1320.4h1.14v-75.74h-1.14zM1069.72 1320.4h1.14v-75.74h-1.14zM1070.84 1320.4h1.14v-75.74h-1.14zM1071.96 1320.4h1.14v-75.74h-1.14zM1073.08 1320.4h1.14v-75.74h-1.14zM1074.21 1320.4h1.14v-75.74h-1.14zM1075.33 1320.4h1.14v-75.74h-1.14zM1076.45 1320.4h1.14v-75.74h-1.14zM1077.57 1320.4h1.14v-75.74h-1.14zM1078.69 1320.4h1.14v-75.74h-1.14zM1079.81 1320.4h1.14v-75.74h-1.14zM1080.93 1320.4h1.14v-75.74h-1.14zM1082.05 1320.4h1.14v-75.74h-1.14zM1083.17 1320.4h1.14v-75.74h-1.14zM1084.29 1320.4h1.14v-44.18h-1.14zM1085.41 1320.4h1.14v-44.18h-1.14zM1086.53 1320.4h1.14v-37.87h-1.14zM1087.65 1320.4h1.14v-44.18h-1.14zM1088.78 1320.4h1.14v-44.18h-1.14zM1089.9 1320.4h1.14v-44.18h-1.14zM1091.02 1320.4h1.14v-37.87h-1.14zM1092.14 1320.4h1.14v-44.18h-1.14zM1093.26 1320.4h1.14v-44.18h-1.14zM1094.38 1320.4h1.14v-44.18h-1.14zM1095.5 1320.4h1.14v-44.18h-1.14zM1096.62 1320.4h1.14v-44.18h-1.14zM1097.74 1320.4h1.14v-37.87h-1.14zM1098.86 1320.4h1.14v-37.87h-1.14zM1099.98 1320.4h1.14v-37.87h-1.14zM1101.1 1320.4h1.14v-50.49h-1.14zM1102.22 1320.4h1.14v-50.49h-1.14zM1103.35 1320.4h1.14v-44.18h-1.14zM1104.47 1320.4h1.14v-44.18h-1.14zM1105.59 1320.4h1.14v-44.18h-1.14zM1106.71 1320.4h1.14v-37.87h-1.14zM1107.83 1320.4h1.14v-44.18h-1.14zM1108.95 1320.4h1.14v-44.18h-1.14zM1110.07 1320.4h1.14v-44.18h-1.14zM1111.19 1320.4h1.14v-44.18h-1.14zM1112.31 1320.4h1.14v-37.87h-1.14zM1113.43 1320.4h1.14v-37.87h-1.14zM1114.55 1320.4h1.14v-37.87h-1.14zM1115.67 1320.4h1.14v-37.87h-1.14zM1116.79 1320.4h1.14v-44.18h-1.14zM1117.92 1320.4h1.14v-44.18h-1.14zM1119.04 1320.4h1.14v-44.18h-1.14zM1120.16 1320.4h1.14v-44.18h-1.14zM1121.28 1320.4h1.14v-44.18h-1.14zM1122.4 1320.4h1.14v-37.87h-1.14zM1123.52 1320.4h1.14v-37.87h-1.14zM1124.64 1320.4h1.14v-44.18h-1.14zM1125.76 1320.4h1.14v-37.87h-1.14zM1126.88 1320.4h1.14v-44.18h-1.14zM1128 1320.4h1.14v-44.18h-1.14zM1129.12 1320.4h1.14v-44.18h-1.14zM1130.24 1320.4h1.14v-37.87h-1.14zM1131.36 1320.4h1.14v-44.18h-1.14zM1132.49 1320.4h1.14v-37.87h-1.14zM1133.61 1320.4h1.14v-44.18h-1.14zM1134.73 1320.4h1.14v-44.18h-1.14zM1135.85 1320.4h1.14v-44.18h-1.14zM1136.97 1320.4h1.14v-44.18h-1.14zM1138.09 1320.4h1.14v-44.18h-1.14zM1139.21 1320.4h1.14v-44.18h-1.14zM1140.33 1320.4h1.14v-44.18h-1.14zM1141.45 1320.4h1.14v-44.18h-1.14zM1142.57 1320.4h1.14v-44.18h-1.14zM1143.69 1320.4h1.14v-44.18h-1.14zM1144.81 1320.4h1.14v-44.18h-1.14zM1145.93 1320.4h1.14v-44.18h-1.14zM1147.06 1320.4h1.14v-44.18h-1.14zM1148.18 1320.4h1.14v-44.18h-1.14zM1149.3 1320.4h1.14v-50.49h-1.14zM1150.42 1320.4h1.14v-44.18h-1.14zM1151.54 1320.4h1.14v-44.18h-1.14zM1152.66 1320.4h1.14v-37.87h-1.14zM1153.78 1320.4h1.14v-44.18h-1.14zM1154.9 1320.4h1.14v-37.87h-1.14zM1156.02 1320.4h1.14v-44.18h-1.14zM1157.14 1320.4h1.14v-44.18h-1.14zM1158.26 1320.4h1.14v-44.18h-1.14zM1159.38 1320.4h1.14v-37.87h-1.14zM1160.5 1320.4h1.14v-44.18h-1.14zM1161.63 1320.4h1.14v-44.18h-1.14zM1162.75 1320.4h1.14v-44.18h-1.14zM1163.87 1320.4h1.14v-44.18h-1.14zM1164.99 1320.4h1.14v-44.18h-1.14zM1166.11 1320.4h1.14v-44.18h-1.14zM1167.23 1320.4h1.14v-44.18h-1.14zM1168.35 1320.4h1.14v-44.18h-1.14zM1169.47 1320.4h1.14v-37.87h-1.14zM1170.59 1320.4h1.14v-44.18h-1.14zM1171.71 1320.4h1.14v-44.18h-1.14zM1172.83 1320.4h1.14v-44.18h-1.14zM1173.95 1320.4h1.14v-44.18h-1.14zM1175.07 1320.4h1.14v-44.18h-1.14zM1176.2 1320.4h1.14v-44.18h-1.14zM1177.32 1320.4h1.14v-37.87h-1.14zM1178.44 1320.4h1.14v-75.74h-1.14zM1179.56 1320.4h1.14v-69.42h-1.14zM1180.68 1320.4h1.14v-63.11h-1.14zM1181.8 1320.4h1.14v-75.74h-1.14zM1182.92 1320.4h1.14v-69.42h-1.14zM1184.04 1320.4h1.14v-75.74h-1.14zM1185.16 1320.4h1.14v-63.11h-1.14zM1186.28 1320.4h1.14v-63.11h-1.14zM1187.4 1320.4h1.14v-75.74h-1.14zM1188.52 1320.4h1.14v-82.05h-1.14zM1189.64 1320.4h1.14v-82.05h-1.14zM1190.77 1320.4h1.14v-82.05h-1.14zM1191.89 1320.4h1.14v-82.05h-1.14zM1193.01 1320.4h1.14v-63.11h-1.14zM1194.13 1320.4h1.14v-75.74h-1.14zM1195.25 1320.4h1.14v-69.42h-1.14zM1196.37 1320.4h1.14v-63.11h-1.14zM1197.49 1320.4h1.14v-63.11h-1.14zM1198.61 1320.4h1.14v-69.42h-1.14zM1199.73 1320.4h1.14v-69.42h-1.14zM1200.85 1320.4h1.14v-75.74h-1.14zM1201.97 1320.4h1.14v-63.11h-1.14zM1203.09 1320.4h1.14v-69.42h-1.14zM1204.21 1320.4h1.14v-63.11h-1.14zM1353.28 1320.4h1.14v-75.74h-1.14zM1354.4 1320.4h1.14v-88.36h-1.14zM1355.52 1320.4h1.14v-82.05h-1.14zM1356.64 1320.4h1.14v-75.74h-1.14zM1357.76 1320.4h1.14v-75.74h-1.14zM1358.88 1320.4h1.14v-82.05h-1.14zM1360 1320.4h1.14v-75.74h-1.14zM1361.12 1320.4h1.14v-75.74h-1.14zM1362.24 1320.4h1.14v-56.8h-1.14zM1363.36 1320.4h1.14v-56.8h-1.14zM1364.48 1320.4h1.14v-56.8h-1.14zM1365.6 1320.4h1.14v-56.8h-1.14zM1366.72 1320.4h1.14v-56.8h-1.14zM1367.85 1320.4h1.14v-56.8h-1.14zM1368.97 1320.4h1.14v-56.8h-1.14zM1370.09 1320.4h1.14v-56.8h-1.14zM1371.21 1320.4h1.14v-56.8h-1.14zM1372.33 1320.4h1.14v-50.49h-1.14zM1373.45 1320.4h1.14v-50.49h-1.14zM1374.57 1320.4h1.14v-50.49h-1.14zM1375.69 1320.4h1.14v-50.49h-1.14zM1376.81 1320.4h1.14v-50.49h-1.14zM1377.93 1320.4h1.14v-50.49h-1.14zM1379.05 1320.4h1.14v-50.49h-1.14zM1380.17 1320.4h1.14v-44.18h-1.14zM1381.29 1320.4h1.14v-37.87h-1.14zM1382.42 1320.4h1.14v-44.18h-1.14zM1383.54 1320.4h1.14v-44.18h-1.14zM1384.66 1320.4h1.14v-37.87h-1.14zM1385.78 1320.4h1.14v-44.18h-1.14zM1386.9 1320.4h1.14v-44.18h-1.14zM1388.02 1320.4h1.14v-44.18h-1.14zM1389.14 1320.4h1.14v-44.18h-1.14zM1390.26 1320.4h1.14v-44.18h-1.14zM1391.38 1320.4h1.14v-37.87h-1.14zM1392.5 1320.4h1.14v-37.87h-1.14zM1393.62 1320.4h1.14v-37.87h-1.14zM1394.74 1320.4h1.14v-44.18h-1.14zM1395.86 1320.4h1.14v-44.18h-1.14zM1396.99 1320.4h1.14v-44.18h-1.14zM1398.11 1320.4h1.14v-44.18h-1.14zM1399.23 1320.4h1.14v-44.18h-1.14zM1400.35 1320.4h1.14v-44.18h-1.14zM1401.47 1320.4h1.14v-44.18h-1.14zM1402.59 1320.4h1.14v-44.18h-1.14zM1403.71 1320.4h1.14v-44.18h-1.14zM1404.83 1320.4h1.14v-44.18h-1.14zM1405.95 1320.4h1.14v-37.87h-1.14zM1407.07 1320.4h1.14v-37.87h-1.14zM1408.19 1320.4h1.14v-44.18h-1.14zM1409.31 1320.4h1.14v-44.18h-1.14zM1410.43 1320.4h1.14v-37.87h-1.14zM1411.56 1320.4h1.14v-44.18h-1.14zM1412.68 1320.4h1.14v-44.18h-1.14zM1413.8 1320.4h1.14v-44.18h-1.14zM1414.92 1320.4h1.14v-37.87h-1.14zM1416.04 1320.4h1.14v-44.18h-1.14zM1417.16 1320.4h1.14v-44.18h-1.14zM1418.28 1320.4h1.14v-56.8h-1.14zM1419.4 1320.4h1.14v-56.8h-1.14zM1420.52 1320.4h1.14v-56.8h-1.14zM1421.64 1320.4h1.14v-44.18h-1.14zM1422.76 1320.4h1.14v-44.18h-1.14zM1423.88 1320.4h1.14v-37.87h-1.14zM1425 1320.4h1.14v-44.18h-1.14zM1426.13 1320.4h1.14v-44.18h-1.14zM1427.25 1320.4h1.14v-44.18h-1.14zM1428.37 1320.4h1.14v-37.87h-1.14zM1429.49 1320.4h1.14v-44.18h-1.14zM1430.61 1320.4h1.14v-44.18h-1.14zM1431.73 1320.4h1.14v-37.87h-1.14zM1432.85 1320.4h1.14v-44.18h-1.14zM1433.97 1320.4h1.14v-37.87h-1.14zM1435.09 1320.4h1.14v-44.18h-1.14zM1436.21 1320.4h1.14v-44.18h-1.14zM1437.33 1320.4h1.14v-37.87h-1.14zM1438.45 1320.4h1.14v-37.87h-1.14zM1439.57 1320.4h1.14v-37.87h-1.14zM1440.7 1320.4h1.14v-44.18h-1.14zM1441.82 1320.4h1.14v-44.18h-1.14zM1442.94 1320.4h1.14v-44.18h-1.14zM1444.06 1320.4h1.14v-44.18h-1.14zM1445.18 1320.4h1.14v-37.87h-1.14zM1446.3 1320.4h1.14v-44.18h-1.14zM1447.42 1320.4h1.14v-37.87h-1.14zM1448.54 1320.4h1.14v-44.18h-1.14zM1449.66 1320.4h1.14v-37.87h-1.14zM1450.78 1320.4h1.14v-44.18h-1.14zM1451.9 1320.4h1.14v-44.18h-1.14zM1453.02 1320.4h1.14v-37.87h-1.14zM1454.14 1320.4h1.14v-37.87h-1.14zM1455.27 1320.4h1.14v-44.18h-1.14zM1456.39 1320.4h1.14v-50.49h-1.14zM1457.51 1320.4h1.14v-50.49h-1.14zM1458.63 1320.4h1.14v-50.49h-1.14zM1459.75 1320.4h1.14v-44.18h-1.14zM1460.87 1320.4h1.14v-44.18h-1.14zM1461.99 1320.4h1.14v-44.18h-1.14zM1463.11 1320.4h1.14v-44.18h-1.14zM1464.23 1320.4h1.14v-44.18h-1.14zM1465.35 1320.4h1.14v-44.18h-1.14zM1466.47 1320.4h1.14v-44.18h-1.14zM1467.59 1320.4h1.14v-44.18h-1.14zM1468.71 1320.4h1.14v-44.18h-1.14zM1469.84 1320.4h1.14v-44.18h-1.14zM1470.96 1320.4h1.14v-44.18h-1.14zM1472.08 1320.4h1.14v-44.18h-1.14zM1473.2 1320.4h1.14v-44.18h-1.14zM1474.32 1320.4h1.14v-44.18h-1.14zM1475.44 1320.4h1.14v-44.18h-1.14zM1476.56 1320.4h1.14v-44.18h-1.14zM1477.68 1320.4h1.14v-37.87h-1.14zM1478.8 1320.4h1.14v-44.18h-1.14zM1479.92 1320.4h1.14v-44.18h-1.14zM1481.04 1320.4h1.14v-44.18h-1.14zM1482.16 1320.4h1.14v-44.18h-1.14zM1483.28 1320.4h1.14v-44.18h-1.14zM1484.41 1320.4h1.14v-44.18h-1.14zM1485.53 1320.4h1.14v-44.18h-1.14zM1486.65 1320.4h1.14v-44.18h-1.14zM1487.77 1320.4h1.14v-44.18h-1.14zM1488.89 1320.4h1.14v-50.49h-1.14zM1490.01 1320.4h1.14v-50.49h-1.14zM1491.13 1320.4h1.14v-50.49h-1.14zM1492.25 1320.4h1.14v-44.18h-1.14zM1493.37 1320.4h1.14v-44.18h-1.14zM1494.49 1320.4h1.14v-44.18h-1.14zM1495.61 1320.4h1.14v-37.87h-1.14zM1496.73 1320.4h1.14v-44.18h-1.14zM1497.85 1320.4h1.14v-44.18h-1.14zM1498.98 1320.4h1.14v-44.18h-1.14zM1500.1 1320.4h1.14v-44.18h-1.14zM1501.22 1320.4h1.14v-82.05h-1.14zM1502.34 1320.4h1.14v-82.05h-1.14zM1503.46 1320.4h1.14v-69.42h-1.14zM1504.58 1320.4h1.14v-75.74h-1.14zM1505.7 1320.4h1.14v-75.74h-1.14zM1506.82 1320.4h1.14v-75.74h-1.14zM1507.94 1320.4h1.14v-69.42h-1.14zM1509.06 1320.4h1.14v-69.42h-1.14zM1510.18 1320.4h1.14v-69.42h-1.14zM1511.3 1320.4h1.14v-69.42h-1.14zM1512.42 1320.4h1.14v-69.42h-1.14zM1513.55 1320.4h1.14v-69.42h-1.14zM1514.67 1320.4h1.14v-69.42h-1.14zM1515.79 1320.4h1.14v-69.42h-1.14zM1516.91 1320.4h1.14v-69.42h-1.14zM1518.03 1320.4h1.14v-69.42h-1.14zM1519.15 1320.4h1.14v-69.42h-1.14zM1520.27 1320.4h1.14v-69.42h-1.14zM1521.39 1320.4h1.14v-69.42h-1.14zM1522.51 1320.4h1.14v-75.74h-1.14zM1523.63 1320.4h1.14v-75.74h-1.14zM1524.75 1320.4h1.14v-75.74h-1.14zM1525.87 1320.4h1.14v-75.74h-1.14zM1526.99 1320.4h1.14v-75.74h-1.14zM1676.06 1320.4h1.14v-113.6h-1.14zM1677.18 1320.4h1.14v-107.29h-1.14zM1678.3 1320.4h1.14v-88.36h-1.14zM1679.42 1320.4h1.14v-88.36h-1.14zM1680.54 1320.4h1.14v-107.29h-1.14zM1681.66 1320.4h1.14v-94.67h-1.14zM1682.78 1320.4h1.14v-88.36h-1.14zM1683.9 1320.4h1.14v-82.05h-1.14zM1685.02 1320.4h1.14v-88.36h-1.14zM1686.14 1320.4h1.14v-82.05h-1.14zM1687.26 1320.4h1.14v-88.36h-1.14zM1688.38 1320.4h1.14v-88.36h-1.14zM1689.5 1320.4h1.14v-88.36h-1.14zM1690.63 1320.4h1.14v-88.36h-1.14zM1691.75 1320.4h1.14v-82.05h-1.14zM1692.87 1320.4h1.14v-82.05h-1.14zM1693.99 1320.4h1.14v-88.36h-1.14zM1695.11 1320.4h1.14v-82.05h-1.14zM1696.23 1320.4h1.14v-88.36h-1.14zM1697.35 1320.4h1.14v-88.36h-1.14zM1698.47 1320.4h1.14v-88.36h-1.14zM1699.59 1320.4h1.14v-88.36h-1.14zM1700.71 1320.4h1.14v-94.67h-1.14zM1701.83 1320.4h1.14v-94.67h-1.14zM1702.95 1320.4h1.14v-88.36h-1.14zM1704.07 1320.4h1.14v-82.05h-1.14zM1705.2 1320.4h1.14v-75.74h-1.14zM1706.32 1320.4h1.14v-75.74h-1.14zM1707.44 1320.4h1.14v-82.05h-1.14zM1708.56 1320.4h1.14v-82.05h-1.14zM1709.68 1320.4h1.14v-75.74h-1.14zM1710.8 1320.4h1.14v-75.74h-1.14zM1711.92 1320.4h1.14v-82.05h-1.14zM1713.04 1320.4h1.14v-82.05h-1.14zM1714.16 1320.4h1.14v-75.74h-1.14zM1715.28 1320.4h1.14v-75.74h-1.14zM1716.4 1320.4h1.14v-82.05h-1.14zM1717.52 1320.4h1.14v-88.36h-1.14zM1718.64 1320.4h1.14v-88.36h-1.14zM1719.77 1320.4h1.14v-75.74h-1.14zM1720.89 1320.4h1.14v-82.05h-1.14zM1722.01 1320.4h1.14v-82.05h-1.14zM1723.13 1320.4h1.14v-82.05h-1.14zM1724.25 1320.4h1.14v-75.74h-1.14zM1725.37 1320.4h1.14v-82.05h-1.14zM1726.49 1320.4h1.14v-75.74h-1.14zM1727.61 1320.4h1.14v-75.74h-1.14zM1728.73 1320.4h1.14v-82.05h-1.14zM1729.85 1320.4h1.14v-44.18h-1.14zM1730.97 1320.4h1.14v-50.49h-1.14zM1732.09 1320.4h1.14v-50.49h-1.14zM1733.21 1320.4h1.14v-50.49h-1.14zM1734.34 1320.4h1.14v-50.49h-1.14zM1735.46 1320.4h1.14v-50.49h-1.14zM1736.58 1320.4h1.14v-56.8h-1.14zM1737.7 1320.4h1.14v-56.8h-1.14zM1738.82 1320.4h1.14v-69.42h-1.14zM1739.94 1320.4h1.14v-50.49h-1.14zM1741.06 1320.4h1.14v-50.49h-1.14zM1742.18 1320.4h1.14v-50.49h-1.14zM1743.3 1320.4h1.14v-44.18h-1.14zM1744.42 1320.4h1.14v-50.49h-1.14zM1745.54 1320.4h1.14v-50.49h-1.14zM1746.66 1320.4h1.14v-44.18h-1.14zM1747.78 1320.4h1.14v-50.49h-1.14zM1748.91 1320.4h1.14v-44.18h-1.14zM1750.03 1320.4h1.14v-50.49h-1.14zM1751.15 1320.4h1.14v-50.49h-1.14zM1752.27 1320.4h1.14v-50.49h-1.14zM1753.39 1320.4h1.14v-50.49h-1.14zM1754.51 1320.4h1.14v-50.49h-1.14zM1755.63 1320.4h1.14v-50.49h-1.14zM1756.75 1320.4h1.14v-50.49h-1.14zM1757.87 1320.4h1.14v-50.49h-1.14zM1758.99 1320.4h1.14v-50.49h-1.14zM1760.11 1320.4h1.14v-50.49h-1.14zM1761.23 1320.4h1.14v-50.49h-1.14zM1762.35 1320.4h1.14v-50.49h-1.14zM1763.48 1320.4h1.14v-50.49h-1.14zM1764.6 1320.4h1.14v-56.8h-1.14zM1765.72 1320.4h1.14v-56.8h-1.14zM1766.84 1320.4h1.14v-50.49h-1.14zM1767.96 1320.4h1.14v-50.49h-1.14zM1769.08 1320.4h1.14v-44.18h-1.14zM1770.2 1320.4h1.14v-44.18h-1.14zM1771.32 1320.4h1.14v-50.49h-1.14zM1772.44 1320.4h1.14v-50.49h-1.14zM1773.56 1320.4h1.14v-50.49h-1.14zM1774.68 1320.4h1.14v-50.49h-1.14zM1775.8 1320.4h1.14v-50.49h-1.14zM1776.92 1320.4h1.14v-50.49h-1.14zM1778.05 1320.4h1.14v-50.49h-1.14zM1779.17 1320.4h1.14v-50.49h-1.14zM1780.29 1320.4h1.14v-50.49h-1.14zM1781.41 1320.4h1.14v-50.49h-1.14zM1782.53 1320.4h1.14v-50.49h-1.14zM1783.65 1320.4h1.14v-50.49h-1.14zM1784.77 1320.4h1.14v-50.49h-1.14zM1785.89 1320.4h1.14v-56.8h-1.14zM1787.01 1320.4h1.14v-56.8h-1.14zM1788.13 1320.4h1.14v-56.8h-1.14zM1789.25 1320.4h1.14v-56.8h-1.14zM1790.37 1320.4h1.14v-44.18h-1.14zM1791.49 1320.4h1.14v-50.49h-1.14zM1792.62 1320.4h1.14v-50.49h-1.14zM1793.74 1320.4h1.14v-56.8h-1.14zM1794.86 1320.4h1.14v-50.49h-1.14zM1795.98 1320.4h1.14v-50.49h-1.14zM1797.1 1320.4h1.14v-44.18h-1.14zM1798.22 1320.4h1.14v-50.49h-1.14zM1799.34 1320.4h1.14v-44.18h-1.14zM1800.46 1320.4h1.14v-44.18h-1.14zM1801.58 1320.4h1.14v-50.49h-1.14zM1802.7 1320.4h1.14v-44.18h-1.14zM1803.82 1320.4h1.14v-50.49h-1.14zM1804.94 1320.4h1.14v-44.18h-1.14zM1806.06 1320.4h1.14v-50.49h-1.14zM1807.19 1320.4h1.14v-44.18h-1.14zM1808.31 1320.4h1.14v-44.18h-1.14zM1809.43 1320.4h1.14v-50.49h-1.14zM1810.55 1320.4h1.14v-44.18h-1.14zM1811.67 1320.4h1.14v-44.18h-1.14zM1812.79 1320.4h1.14v-50.49h-1.14zM1813.91 1320.4h1.14v-56.8h-1.14zM1815.03 1320.4h1.14v-56.8h-1.14zM1816.15 1320.4h1.14v-50.49h-1.14zM1817.27 1320.4h1.14v-44.18h-1.14zM1818.39 1320.4h1.14v-50.49h-1.14zM1819.51 1320.4h1.14v-44.18h-1.14zM1820.63 1320.4h1.14v-50.49h-1.14zM1821.76 1320.4h1.14v-44.18h-1.14zM1822.88 1320.4h1.14v-50.49h-1.14zM1824 1320.4h1.14v-82.05h-1.14zM1825.12 1320.4h1.14v-82.05h-1.14zM1826.24 1320.4h1.14v-69.42h-1.14zM1827.36 1320.4h1.14v-75.74h-1.14zM1828.48 1320.4h1.14v-69.42h-1.14zM1829.6 1320.4h1.14v-75.74h-1.14zM1830.72 1320.4h1.14v-75.74h-1.14zM1831.84 1320.4h1.14v-69.42h-1.14zM1832.96 1320.4h1.14v-69.42h-1.14zM1834.08 1320.4h1.14v-69.42h-1.14zM1835.2 1320.4h1.14v-69.42h-1.14zM1836.33 1320.4h1.14v-69.42h-1.14zM1837.45 1320.4h1.14v-69.42h-1.14zM1838.57 1320.4h1.14v-75.74h-1.14zM1839.69 1320.4h1.14v-69.42h-1.14zM1840.81 1320.4h1.14v-75.74h-1.14zM1841.93 1320.4h1.14v-69.42h-1.14zM1843.05 1320.4h1.14v-69.42h-1.14zM1844.17 1320.4h1.14v-69.42h-1.14zM1845.29 1320.4h1.14v-82.05h-1.14zM1846.41 1320.4h1.14v-82.05h-1.14zM1847.53 1320.4h1.14v-82.05h-1.14zM1848.65 1320.4h1.14v-82.05h-1.14zM1849.77 1320.4h1.14v-69.42h-1.14zM1998.84 1320.4h1.14v-100.98h-1.14zM1999.96 1320.4h1.14v-94.67h-1.14zM2001.08 1320.4h1.14v-94.67h-1.14zM2002.2 1320.4h1.14v-100.98h-1.14zM2003.32 1320.4h1.14v-94.67h-1.14zM2004.44 1320.4h1.14v-94.67h-1.14zM2005.56 1320.4h1.14v-100.98h-1.14zM2006.68 1320.4h1.14v-94.67h-1.14zM2007.8 1320.4h1.14v-100.98h-1.14zM2008.92 1320.4h1.14v-94.67h-1.14zM2010.04 1320.4h1.14v-94.67h-1.14zM2011.16 1320.4h1.14v-100.98h-1.14zM2012.28 1320.4h1.14v-94.67h-1.14zM2013.41 1320.4h1.14v-94.67h-1.14zM2014.53 1320.4h1.14v-100.98h-1.14zM2015.65 1320.4h1.14v-94.67h-1.14zM2016.77 1320.4h1.14v-94.67h-1.14zM2017.89 1320.4h1.14v-94.67h-1.14zM2019.01 1320.4h1.14v-94.67h-1.14zM2020.13 1320.4h1.14v-94.67h-1.14zM2021.25 1320.4h1.14v-94.67h-1.14zM2022.37 1320.4h1.14v-94.67h-1.14zM2023.49 1320.4h1.14v-100.98h-1.14zM2024.61 1320.4h1.14v-94.67h-1.14zM2025.73 1320.4h1.14v-94.67h-1.14zM2026.85 1320.4h1.14v-94.67h-1.14zM2027.98 1320.4h1.14v-94.67h-1.14zM2029.1 1320.4h1.14v-94.67h-1.14zM2030.22 1320.4h1.14v-88.36h-1.14zM2031.34 1320.4h1.14v-88.36h-1.14zM2032.46 1320.4h1.14v-88.36h-1.14zM2033.58 1320.4h1.14v-88.36h-1.14zM2034.7 1320.4h1.14v-88.36h-1.14zM2035.82 1320.4h1.14v-82.05h-1.14zM2036.94 1320.4h1.14v-82.05h-1.14zM2038.06 1320.4h1.14v-82.05h-1.14zM2039.18 1320.4h1.14v-82.05h-1.14zM2040.3 1320.4h1.14v-82.05h-1.14zM2041.42 1320.4h1.14v-69.42h-1.14zM2042.55 1320.4h1.14v-69.42h-1.14zM2043.67 1320.4h1.14v-69.42h-1.14zM2044.79 1320.4h1.14v-69.42h-1.14zM2045.91 1320.4h1.14v-75.74h-1.14zM2047.03 1320.4h1.14v-75.74h-1.14zM2048.15 1320.4h1.14v-75.74h-1.14zM2049.27 1320.4h1.14v-75.74h-1.14zM2050.39 1320.4h1.14v-75.74h-1.14zM2051.51 1320.4h1.14v-75.74h-1.14zM2052.63 1320.4h1.14v-37.87h-1.14zM2053.75 1320.4h1.14v-37.87h-1.14zM2054.87 1320.4h1.14v-37.87h-1.14zM2055.99 1320.4h1.14v-37.87h-1.14zM2057.12 1320.4h1.14v-37.87h-1.14zM2058.24 1320.4h1.14v-37.87h-1.14zM2059.36 1320.4h1.14v-37.87h-1.14zM2060.48 1320.4h1.14v-44.18h-1.14zM2061.6 1320.4h1.14v-44.18h-1.14zM2062.72 1320.4h1.14v-37.87h-1.14zM2063.84 1320.4h1.14v-37.87h-1.14zM2064.96 1320.4h1.14v-37.87h-1.14zM2066.08 1320.4h1.14v-44.18h-1.14zM2067.2 1320.4h1.14v-44.18h-1.14zM2068.32 1320.4h1.14v-44.18h-1.14zM2069.44 1320.4h1.14v-37.87h-1.14zM2070.56 1320.4h1.14v-37.87h-1.14zM2071.69 1320.4h1.14v-37.87h-1.14zM2072.81 1320.4h1.14v-37.87h-1.14zM2073.93 1320.4h1.14v-44.18h-1.14zM2075.05 1320.4h1.14v-44.18h-1.14zM2076.17 1320.4h1.14v-37.87h-1.14zM2077.29 1320.4h1.14v-37.87h-1.14zM2078.41 1320.4h1.14v-37.87h-1.14zM2079.53 1320.4h1.14v-37.87h-1.14zM2080.65 1320.4h1.14v-37.87h-1.14zM2081.77 1320.4h1.14v-37.87h-1.14zM2082.89 1320.4h1.14v-37.87h-1.14zM2084.01 1320.4h1.14v-37.87h-1.14zM2085.13 1320.4h1.14v-44.18h-1.14zM2086.26 1320.4h1.14v-37.87h-1.14zM2087.38 1320.4h1.14v-37.87h-1.14zM2088.5 1320.4h1.14v-44.18h-1.14zM2089.62 1320.4h1.14v-44.18h-1.14zM2090.74 1320.4h1.14v-44.18h-1.14zM2091.86 1320.4h1.14v-44.18h-1.14zM2092.98 1320.4h1.14v-44.18h-1.14zM2094.1 1320.4h1.14v-37.87h-1.14zM2095.22 1320.4h1.14v-37.87h-1.14zM2096.34 1320.4h1.14v-37.87h-1.14zM2097.46 1320.4h1.14v-37.87h-1.14zM2098.58 1320.4h1.14v-37.87h-1.14zM2099.7 1320.4h1.14v-44.18h-1.14zM2100.83 1320.4h1.14v-37.87h-1.14zM2101.95 1320.4h1.14v-37.87h-1.14zM2103.07 1320.4h1.14v-44.18h-1.14zM2104.19 1320.4h1.14v-44.18h-1.14zM2105.31 1320.4h1.14v-44.18h-1.14zM2106.43 1320.4h1.14v-44.18h-1.14zM2107.55 1320.4h1.14v-44.18h-1.14zM2108.67 1320.4h1.14v-37.87h-1.14zM2109.79 1320.4h1.14v-37.87h-1.14zM2110.91 1320.4h1.14v-37.87h-1.14zM2112.03 1320.4h1.14v-37.87h-1.14zM2113.15 1320.4h1.14v-37.87h-1.14zM2114.27 1320.4h1.14v-44.18h-1.14zM2115.4 1320.4h1.14v-44.18h-1.14zM2116.52 1320.4h1.14v-44.18h-1.14zM2117.64 1320.4h1.14v-44.18h-1.14zM2118.76 1320.4h1.14v-44.18h-1.14zM2119.88 1320.4h1.14v-44.18h-1.14zM2121 1320.4h1.14v-44.18h-1.14zM2122.12 1320.4h1.14v-44.18h-1.14zM2123.24 1320.4h1.14v-37.87h-1.14zM2124.36 1320.4h1.14v-37.87h-1.14zM2125.48 1320.4h1.14v-37.87h-1.14zM2126.6 1320.4h1.14v-37.87h-1.14zM2127.72 1320.4h1.14v-44.18h-1.14zM2128.84 1320.4h1.14v-44.18h-1.14zM2129.97 1320.4h1.14v-44.18h-1.14zM2131.09 1320.4h1.14v-44.18h-1.14zM2132.21 1320.4h1.14v-44.18h-1.14zM2133.33 1320.4h1.14v-44.18h-1.14zM2134.45 1320.4h1.14v-44.18h-1.14zM2135.57 1320.4h1.14v-44.18h-1.14zM2136.69 1320.4h1.14v-37.87h-1.14zM2137.81 1320.4h1.14v-37.87h-1.14zM2138.93 1320.4h1.14v-50.49h-1.14zM2140.05 1320.4h1.14v-50.49h-1.14zM2141.17 1320.4h1.14v-50.49h-1.14zM2142.29 1320.4h1.14v-50.49h-1.14zM2143.41 1320.4h1.14v-44.18h-1.14zM2144.54 1320.4h1.14v-44.18h-1.14zM2145.66 1320.4h1.14v-44.18h-1.14zM2146.78 1320.4h1.14v-75.74h-1.14zM2147.9 1320.4h1.14v-75.74h-1.14zM2149.02 1320.4h1.14v-56.8h-1.14zM2150.14 1320.4h1.14v-56.8h-1.14zM2151.26 1320.4h1.14v-63.11h-1.14zM2152.38 1320.4h1.14v-56.8h-1.14zM2153.5 1320.4h1.14v-63.11h-1.14zM2154.62 1320.4h1.14v-63.11h-1.14zM2155.74 1320.4h1.14v-63.11h-1.14zM2156.86 1320.4h1.14v-63.11h-1.14zM2157.98 1320.4h1.14v-63.11h-1.14zM2159.11 1320.4h1.14v-63.11h-1.14zM2160.23 1320.4h1.14v-56.8h-1.14zM2161.35 1320.4h1.14v-56.8h-1.14zM2162.47 1320.4h1.14v-56.8h-1.14zM2163.59 1320.4h1.14v-56.8h-1.14zM2164.71 1320.4h1.14v-63.11h-1.14zM2165.83 1320.4h1.14v-63.11h-1.14zM2166.95 1320.4h1.14v-63.11h-1.14zM2168.07 1320.4h1.14v-56.8h-1.14zM2169.19 1320.4h1.14v-63.11h-1.14zM2170.31 1320.4h1.14v-63.11h-1.14zM2171.43 1320.4h1.14v-56.8h-1.14zM2172.55 1320.4h1.14v-56.8h-1.14zM2321.62 1320.4h1.14v-94.67h-1.14zM2322.74 1320.4h1.14v-100.98h-1.14zM2323.86 1320.4h1.14v-100.98h-1.14zM2324.98 1320.4h1.14v-100.98h-1.14zM2326.1 1320.4h1.14v-94.67h-1.14zM2327.22 1320.4h1.14v-94.67h-1.14zM2328.34 1320.4h1.14v-94.67h-1.14zM2329.46 1320.4h1.14v-100.98h-1.14zM2330.58 1320.4h1.14v-94.67h-1.14zM2331.7 1320.4h1.14v-100.98h-1.14zM2332.82 1320.4h1.14v-100.98h-1.14zM2333.94 1320.4h1.14v-94.67h-1.14zM2335.07 1320.4h1.14v-100.98h-1.14zM2336.19 1320.4h1.14v-100.98h-1.14zM2337.31 1320.4h1.14v-100.98h-1.14zM2338.43 1320.4h1.14v-94.67h-1.14zM2339.55 1320.4h1.14v-100.98h-1.14zM2340.67 1320.4h1.14v-94.67h-1.14zM2341.79 1320.4h1.14v-107.29h-1.14zM2342.91 1320.4h1.14v-100.98h-1.14zM2344.03 1320.4h1.14v-107.29h-1.14zM2345.15 1320.4h1.14v-100.98h-1.14zM2346.27 1320.4h1.14v-107.29h-1.14zM2347.39 1320.4h1.14v-100.98h-1.14zM2348.51 1320.4h1.14v-100.98h-1.14zM2349.63 1320.4h1.14v-75.74h-1.14zM2350.76 1320.4h1.14v-75.74h-1.14zM2351.88 1320.4h1.14v-82.05h-1.14zM2353 1320.4h1.14v-75.74h-1.14zM2354.12 1320.4h1.14v-75.74h-1.14zM2355.24 1320.4h1.14v-82.05h-1.14zM2356.36 1320.4h1.14v-82.05h-1.14zM2357.48 1320.4h1.14v-75.74h-1.14zM2358.6 1320.4h1.14v-82.05h-1.14zM2359.72 1320.4h1.14v-82.05h-1.14zM2360.84 1320.4h1.14v-88.36h-1.14zM2361.96 1320.4h1.14v-88.36h-1.14zM2363.08 1320.4h1.14v-88.36h-1.14zM2364.2 1320.4h1.14v-82.05h-1.14zM2365.33 1320.4h1.14v-88.36h-1.14zM2366.45 1320.4h1.14v-88.36h-1.14zM2367.57 1320.4h1.14v-88.36h-1.14zM2368.69 1320.4h1.14v-88.36h-1.14zM2369.81 1320.4h1.14v-82.05h-1.14zM2370.93 1320.4h1.14v-82.05h-1.14zM2372.05 1320.4h1.14v-82.05h-1.14zM2373.17 1320.4h1.14v-82.05h-1.14zM2374.29 1320.4h1.14v-75.74h-1.14zM2375.41 1320.4h1.14v-75.74h-1.14zM2376.53 1320.4h1.14v-44.18h-1.14zM2377.65 1320.4h1.14v-44.18h-1.14zM2378.77 1320.4h1.14v-44.18h-1.14zM2379.9 1320.4h1.14v-50.49h-1.14zM2381.02 1320.4h1.14v-50.49h-1.14zM2382.14 1320.4h1.14v-50.49h-1.14zM2383.26 1320.4h1.14v-44.18h-1.14zM2384.38 1320.4h1.14v-50.49h-1.14zM2385.5 1320.4h1.14v-50.49h-1.14zM2386.62 1320.4h1.14v-50.49h-1.14zM2387.74 1320.4h1.14v-44.18h-1.14zM2388.86 1320.4h1.14v-44.18h-1.14zM2389.98 1320.4h1.14v-44.18h-1.14zM2391.1 1320.4h1.14v-44.18h-1.14zM2392.22 1320.4h1.14v-50.49h-1.14zM2393.34 1320.4h1.14v-50.49h-1.14zM2394.47 1320.4h1.14v-44.18h-1.14zM2395.59 1320.4h1.14v-50.49h-1.14zM2396.71 1320.4h1.14v-44.18h-1.14zM2397.83 1320.4h1.14v-44.18h-1.14zM2398.95 1320.4h1.14v-44.18h-1.14zM2400.07 1320.4h1.14v-44.18h-1.14zM2401.19 1320.4h1.14v-44.18h-1.14zM2402.31 1320.4h1.14v-44.18h-1.14zM2403.43 1320.4h1.14v-44.18h-1.14zM2404.55 1320.4h1.14v-44.18h-1.14zM2405.67 1320.4h1.14v-44.18h-1.14zM2406.79 1320.4h1.14v-44.18h-1.14zM2407.91 1320.4h1.14v-56.8h-1.14zM2409.04 1320.4h1.14v-56.8h-1.14zM2410.16 1320.4h1.14v-56.8h-1.14zM2411.28 1320.4h1.14v-56.8h-1.14zM2412.4 1320.4h1.14v-56.8h-1.14zM2413.52 1320.4h1.14v-44.18h-1.14zM2414.64 1320.4h1.14v-44.18h-1.14z" fill="#a0edc3"/>
<path d="M882.56 1320.4h1.14v-75.74h-1.14zM883.68 1320.4h1.14v-69.42h-1.14zM884.8 1320.4h1.14v-75.74h-1.14zM885.92 1320.4h1.14v-69.42h-1.14zM887.04 1320.4h1.14v-69.42h-1.14zM888.16 1320.4h1.14v-69.42h-1.14zM889.28 1320.4h1.14v-69.42h-1.14zM890.4 1320.4h1.14v-69.42h-1.14zM891.52 1320.4h1.14v-69.42h-1.14zM892.64 1320.4h1.14v-69.42h-1.14zM893.76 1320.4h1.14v-69.42h-1.14zM894.88 1320.4h1.14v-69.42h-1.14zM896 1320.4h1.14v-75.74h-1.14zM897.12 1320.4h1.14v-69.42h-1.14zM898.25 1320.4h1.14v-75.74h-1.14zM899.37 1320.4h1.14v-75.74h-1.14zM900.49 1320.4h1.14v-69.42h-1.14zM901.61 1320.4h1.14v-75.74h-1.14zM902.73 1320.4h1.14v-75.74h-1.14zM903.85 1320.4h1.14v-75.74h-1.14zM904.97 1320.4h1.14v-69.42h-1.14zM906.09 1320.4h1.14v-69.42h-1.14zM907.21 1320.4h1.14v-69.42h-1.14zM908.33 1320.4h1.14v-75.74h-1.14zM909.45 1320.4h1.14v-69.42h-1.14zM910.57 1320.4h1.14v-69.42h-1.14zM911.69 1320.4h1.14v-69.42h-1.14zM912.82 1320.4h1.14v-69.42h-1.14zM913.94 1320.4h1.14v-69.42h-1.14zM915.06 1320.4h1.14v-69.42h-1.14zM916.18 1320.4h1.14v-75.74h-1.14zM917.3 1320.4h1.14v-69.42h-1.14zM918.42 1320.4h1.14v-75.74h-1.14zM919.54 1320.4h1.14v-69.42h-1.14zM920.66 1320.4h1.14v-69.42h-1.14zM921.78 1320.4h1.14v-69.42h-1.14zM922.9 1320.4h1.14v-69.42h-1.14zM924.02 1320.4h1.14v-170.4h-1.14zM925.14 1320.4h1.14v-151.47h-1.14zM926.26 1320.4h1.14v-170.4h-1.14zM927.39 1320.4h1.14v-157.78h-1.14zM928.51 1320.4h1.14v-239.83h-1.14zM929.63 1320.4h1.14v-189.34h-1.14zM930.75 1320.4h1.14v-189.34h-1.14zM931.87 1320.4h1.14v-309.25h-1.14zM932.99 1320.4h1.14v-454.41h-1.14zM934.11 1320.4h1.14v-366.05h-1.14zM935.23 1320.4h1.14v-220.89h-1.14zM936.35 1320.4h1.14v-157.78h-1.14zM937.47 1320.4h1.14v-100.98h-1.14zM938.59 1320.4h1.14v-100.98h-1.14zM939.71 1320.4h1.14v-100.98h-1.14zM940.83 1320.4h1.14v-94.67h-1.14zM941.96 1320.4h1.14v-100.98h-1.14zM943.08 1320.4h1.14v-138.85h-1.14zM944.2 1320.4h1.14v-164.09h-1.14zM945.32 1320.4h1.14v-126.23h-1.14zM946.44 1320.4h1.14v-151.47h-1.14zM947.56 1320.4h1.14v-157.78h-1.14zM948.68 1320.4h1.14v-138.85h-1.14zM949.8 1320.4h1.14v-132.54h-1.14zM950.92 1320.4h1.14v-157.78h-1.14zM952.04 1320.4h1.14v-138.85h-1.14zM953.16 1320.4h1.14v-214.58h-1.14zM954.28 1320.4h1.14v-208.27h-1.14zM955.4 1320.4h1.14v-164.09h-1.14zM956.53 1320.4h1.14v-189.34h-1.14zM957.65 1320.4h1.14v-170.4h-1.14zM958.77 1320.4h1.14v-138.85h-1.14zM959.89 1320.4h1.14v-107.29h-1.14zM961.01 1320.4h1.14v-100.98h-1.14zM962.13 1320.4h1.14v-100.98h-1.14zM963.25 1320.4h1.14v-100.98h-1.14zM964.37 1320.4h1.14v-113.6h-1.14zM965.49 1320.4h1.14v-100.98h-1.14zM966.61 1320.4h1.14v-100.98h-1.14zM967.73 1320.4h1.14v-107.29h-1.14zM968.85 1320.4h1.14v-113.6h-1.14zM969.97 1320.4h1.14v-100.98h-1.14zM971.1 1320.4h1.14v-113.6h-1.14zM972.22 1320.4h1.14v-107.29h-1.14zM973.34 1320.4h1.14v-113.6h-1.14zM974.46 1320.4h1.14v-113.6h-1.14zM975.58 1320.4h1.14v-309.25h-1.14zM976.7 1320.4h1.14v-284.01h-1.14zM977.82 1320.4h1.14v-252.45h-1.14zM978.94 1320.4h1.14v-252.45h-1.14zM980.06 1320.4h1.14v-208.27h-1.14zM981.18 1320.4h1.14v-176.72h-1.14zM982.3 1320.4h1.14v-208.27h-1.14zM983.42 1320.4h1.14v-189.34h-1.14zM984.54 1320.4h1.14v-258.76h-1.14zM985.67 1320.4h1.14v-227.21h-1.14zM986.79 1320.4h1.14v-157.78h-1.14zM987.91 1320.4h1.14v-157.78h-1.14zM989.03 1320.4h1.14v-170.4h-1.14zM990.15 1320.4h1.14v-145.16h-1.14zM991.27 1320.4h1.14v-296.63h-1.14zM992.39 1320.4h1.14v-252.45h-1.14zM993.51 1320.4h1.14v-189.34h-1.14zM994.63 1320.4h1.14v-252.45h-1.14zM995.75 1320.4h1.14v-220.89h-1.14zM996.87 1320.4h1.14v-189.34h-1.14zM997.99 1320.4h1.14v-302.94h-1.14zM999.11 1320.4h1.14v-334.5h-1.14zM1000.24 1320.4h1.14v-277.7h-1.14zM1001.36 1320.4h1.14v-277.7h-1.14zM1002.48 1320.4h1.14v-170.4h-1.14zM1003.6 1320.4h1.14v-189.34h-1.14zM1004.72 1320.4h1.14v-145.16h-1.14zM1005.84 1320.4h1.14v-145.16h-1.14zM1006.96 1320.4h1.14v-126.23h-1.14zM1008.08 1320.4h1.14v-119.91h-1.14zM1009.2 1320.4h1.14v-119.91h-1.14zM1010.32 1320.4h1.14v-113.6h-1.14zM1011.44 1320.4h1.14v-119.91h-1.14zM1012.56 1320.4h1.14v-100.98h-1.14zM1013.68 1320.4h1.14v-100.98h-1.14zM1014.81 1320.4h1.14v-119.91h-1.14zM1015.93 1320.4h1.14v-107.29h-1.14zM1017.05 1320.4h1.14v-113.6h-1.14zM1018.17 1320.4h1.14v-119.91h-1.14zM1019.29 1320.4h1.14v-107.29h-1.14zM1020.41 1320.4h1.14v-100.98h-1.14zM1021.53 1320.4h1.14v-100.98h-1.14zM1022.65 1320.4h1.14v-100.98h-1.14zM1023.77 1320.4h1.14v-119.91h-1.14zM1024.89 1320.4h1.14v-201.96h-1.14zM1026.01 1320.4h1.14v-233.52h-1.14zM1027.13 1320.4h1.14v-157.78h-1.14zM1028.25 1320.4h1.14v-126.23h-1.14zM1029.38 1320.4h1.14v-126.23h-1.14zM1205.34 1320.4h1.14v-75.74h-1.14zM1206.46 1320.4h1.14v-69.42h-1.14zM1207.58 1320.4h1.14v-69.42h-1.14zM1208.7 1320.4h1.14v-63.11h-1.14zM1209.82 1320.4h1.14v-69.42h-1.14zM1210.94 1320.4h1.14v-69.42h-1.14zM1212.06 1320.4h1.14v-63.11h-1.14zM1213.18 1320.4h1.14v-63.11h-1.14zM1214.3 1320.4h1.14v-63.11h-1.14zM1215.42 1320.4h1.14v-63.11h-1.14zM1216.54 1320.4h1.14v-63.11h-1.14zM1217.66 1320.4h1.14v-69.42h-1.14zM1218.78 1320.4h1.14v-69.42h-1.14zM1219.9 1320.4h1.14v-63.11h-1.14zM1221.03 1320.4h1.14v-69.42h-1.14zM1222.15 1320.4h1.14v-69.42h-1.14zM1223.27 1320.4h1.14v-63.11h-1.14zM1224.39 1320.4h1.14v-63.11h-1.14zM1225.51 1320.4h1.14v-69.42h-1.14zM1226.63 1320.4h1.14v-63.11h-1.14zM1227.75 1320.4h1.14v-63.11h-1.14zM1228.87 1320.4h1.14v-63.11h-1.14zM1229.99 1320.4h1.14v-63.11h-1.14zM1231.11 1320.4h1.14v-63.11h-1.14zM1232.23 1320.4h1.14v-63.11h-1.14zM1233.35 1320.4h1.14v-63.11h-1.14zM1234.47 1320.4h1.14v-63.11h-1.14zM1235.6 1320.4h1.14v-63.11h-1.14zM1236.72 1320.4h1.14v-63.11h-1.14zM1237.84 1320.4h1.14v-69.42h-1.14zM1238.96 1320.4h1.14v-69.42h-1.14zM1240.08 1320.4h1.14v-69.42h-1.14zM1241.2 1320.4h1.14v-69.42h-1.14zM1242.32 1320.4h1.14v-69.42h-1.14zM1243.44 1320.4h1.14v-69.42h-1.14zM1244.56 1320.4h1.14v-69.42h-1.14zM1245.68 1320.4h1.14v-69.42h-1.14zM1246.8 1320.4h1.14v-69.42h-1.14zM1247.92 1320.4h1.14v-69.42h-1.14zM1249.04 1320.4h1.14v-69.42h-1.14zM1250.17 1320.4h1.14v-69.42h-1.14zM1251.29 1320.4h1.14v-88.36h-1.14zM1252.41 1320.4h1.14v-88.36h-1.14zM1253.53 1320.4h1.14v-75.74h-1.14zM1254.65 1320.4h1.14v-69.42h-1.14zM1255.77 1320.4h1.14v-75.74h-1.14zM1256.89 1320.4h1.14v-75.74h-1.14zM1258.01 1320.4h1.14v-69.42h-1.14zM1259.13 1320.4h1.14v-82.05h-1.14zM1260.25 1320.4h1.14v-82.05h-1.14zM1261.37 1320.4h1.14v-82.05h-1.14zM1262.49 1320.4h1.14v-88.36h-1.14zM1263.61 1320.4h1.14v-75.74h-1.14zM1264.74 1320.4h1.14v-75.74h-1.14zM1265.86 1320.4h1.14v-82.05h-1.14zM1266.98 1320.4h1.14v-75.74h-1.14zM1268.1 1320.4h1.14v-75.74h-1.14zM1269.22 1320.4h1.14v-75.74h-1.14zM1270.34 1320.4h1.14v-75.74h-1.14zM1271.46 1320.4h1.14v-88.36h-1.14zM1272.58 1320.4h1.14v-88.36h-1.14zM1273.7 1320.4h1.14v-69.42h-1.14zM1274.82 1320.4h1.14v-75.74h-1.14zM1275.94 1320.4h1.14v-75.74h-1.14zM1277.06 1320.4h1.14v-69.42h-1.14zM1278.18 1320.4h1.14v-75.74h-1.14zM1279.31 1320.4h1.14v-75.74h-1.14zM1280.43 1320.4h1.14v-82.05h-1.14zM1281.55 1320.4h1.14v-82.05h-1.14zM1282.67 1320.4h1.14v-75.74h-1.14zM1283.79 1320.4h1.14v-75.74h-1.14zM1284.91 1320.4h1.14v-75.74h-1.14zM1286.03 1320.4h1.14v-69.42h-1.14zM1287.15 1320.4h1.14v-75.74h-1.14zM1288.27 1320.4h1.14v-82.05h-1.14zM1289.39 1320.4h1.14v-69.42h-1.14zM1290.51 1320.4h1.14v-75.74h-1.14zM1291.63 1320.4h1.14v-75.74h-1.14zM1292.75 1320.4h1.14v-69.42h-1.14zM1293.88 1320.4h1.14v-82.05h-1.14zM1295 1320.4h1.14v-75.74h-1.14zM1296.12 1320.4h1.14v-82.05h-1.14zM1297.24 1320.4h1.14v-75.74h-1.14zM1298.36 1320.4h1.14v-75.74h-1.14zM1299.48 1320.4h1.14v-69.42h-1.14zM1300.6 1320.4h1.14v-69.42h-1.14zM1301.72 1320.4h1.14v-63.11h-1.14zM1302.84 1320.4h1.14v-63.11h-1.14zM1303.96 1320.4h1.14v-63.11h-1.14zM1305.08 1320.4h1.14v-63.11h-1.14zM1306.2 1320.4h1.14v-63.11h-1.14zM1307.32 1320.4h1.14v-63.11h-1.14zM1308.45 1320.4h1.14v-63.11h-1.14zM1309.57 1320.4h1.14v-63.11h-1.14zM1310.69 1320.4h1.14v-56.8h-1.14zM1311.81 1320.4h1.14v-56.8h-1.14zM1312.93 1320.4h1.14v-56.8h-1.14zM1314.05 1320.4h1.14v-56.8h-1.14zM1315.17 1320.4h1.14v-56.8h-1.14zM1316.29 1320.4h1.14v-56.8h-1.14zM1317.41 1320.4h1.14v-56.8h-1.14zM1318.53 1320.4h1.14v-50.49h-1.14zM1319.65 1320.4h1.14v-50.49h-1.14zM1320.77 1320.4h1.14v-56.8h-1.14zM1321.89 1320.4h1.14v-50.49h-1.14zM1323.02 1320.4h1.14v-56.8h-1.14zM1324.14 1320.4h1.14v-50.49h-1.14zM1325.26 1320.4h1.14v-50.49h-1.14zM1326.38 1320.4h1.14v-50.49h-1.14zM1327.5 1320.4h1.14v-56.8h-1.14zM1328.62 1320.4h1.14v-56.8h-1.14zM1329.74 1320.4h1.14v-50.49h-1.14zM1330.86 1320.4h1.14v-50.49h-1.14zM1331.98 1320.4h1.14v-50.49h-1.14zM1333.1 1320.4h1.14v-50.49h-1.14zM1334.22 1320.4h1.14v-56.8h-1.14zM1335.34 1320.4h1.14v-63.11h-1.14zM1336.46 1320.4h1.14v-63.11h-1.14zM1337.59 1320.4h1.14v-50.49h-1.14zM1338.71 1320.4h1.14v-50.49h-1.14zM1339.83 1320.4h1.14v-50.49h-1.14zM1340.95 1320.4h1.14v-50.49h-1.14zM1342.07 1320.4h1.14v-50.49h-1.14zM1343.19 1320.4h1.14v-50.49h-1.14zM1344.31 1320.4h1.14v-50.49h-1.14zM1345.43 1320.4h1.14v-63.11h-1.14zM1346.55 1320.4h1.14v-50.49h-1.14zM1347.67 1320.4h1.14v-69.42h-1.14zM1348.79 1320.4h1.14v-69.42h-1.14zM1349.91 1320.4h1.14v-69.42h-1.14zM1351.03 1320.4h1.14v-69.42h-1.14zM1352.16 1320.4h1.14v-69.42h-1.14zM1528.12 1320.4h1.14v-75.74h-1.14zM1529.24 1320.4h1.14v-69.42h-1.14zM1530.36 1320.4h1.14v-69.42h-1.14zM1531.48 1320.4h1.14v-69.42h-1.14zM1532.6 1320.4h1.14v-75.74h-1.14zM1533.72 1320.4h1.14v-88.36h-1.14zM1534.84 1320.4h1.14v-88.36h-1.14zM1535.96 1320.4h1.14v-88.36h-1.14zM1537.08 1320.4h1.14v-132.54h-1.14zM1538.2 1320.4h1.14v-132.54h-1.14zM1539.32 1320.4h1.14v-195.65h-1.14zM1540.44 1320.4h1.14v-227.21h-1.14zM1541.56 1320.4h1.14v-328.19h-1.14zM1542.68 1320.4h1.14v-454.41h-1.14zM1543.81 1320.4h1.14v-296.63h-1.14zM1544.93 1320.4h1.14v-296.63h-1.14zM1546.05 1320.4h1.14v-309.25h-1.14zM1547.17 1320.4h1.14v-252.45h-1.14zM1548.29 1320.4h1.14v-290.32h-1.14zM1549.41 1320.4h1.14v-220.89h-1.14zM1550.53 1320.4h1.14v-265.07h-1.14zM1551.65 1320.4h1.14v-284.01h-1.14zM1552.77 1320.4h1.14v-302.94h-1.14zM1553.89 1320.4h1.14v-252.45h-1.14zM1555.01 1320.4h1.14v-290.32h-1.14zM1556.13 1320.4h1.14v-290.32h-1.14zM1557.25 1320.4h1.14v-347.12h-1.14zM1558.38 1320.4h1.14v-328.19h-1.14zM1559.5 1320.4h1.14v-284.01h-1.14zM1560.62 1320.4h1.14v-220.89h-1.14zM1561.74 1320.4h1.14v-176.72h-1.14zM1562.86 1320.4h1.14v-145.16h-1.14zM1563.98 1320.4h1.14v-214.58h-1.14zM1565.1 1320.4h1.14v-246.14h-1.14zM1566.22 1320.4h1.14v-290.32h-1.14zM1567.34 1320.4h1.14v-321.87h-1.14zM1568.46 1320.4h1.14v-265.07h-1.14zM1569.58 1320.4h1.14v-302.94h-1.14zM1570.7 1320.4h1.14v-284.01h-1.14zM1571.82 1320.4h1.14v-290.32h-1.14zM1572.95 1320.4h1.14v-246.14h-1.14zM1574.07 1320.4h1.14v-265.07h-1.14zM1575.19 1320.4h1.14v-328.19h-1.14zM1576.31 1320.4h1.14v-265.07h-1.14zM1577.43 1320.4h1.14v-296.63h-1.14zM1578.55 1320.4h1.14v-296.63h-1.14zM1579.67 1320.4h1.14v-246.14h-1.14zM1580.79 1320.4h1.14v-277.7h-1.14zM1581.91 1320.4h1.14v-309.25h-1.14zM1583.03 1320.4h1.14v-309.25h-1.14zM1584.15 1320.4h1.14v-321.87h-1.14zM1585.27 1320.4h1.14v-284.01h-1.14zM1586.39 1320.4h1.14v-321.87h-1.14zM1587.52 1320.4h1.14v-321.87h-1.14zM1588.64 1320.4h1.14v-246.14h-1.14zM1589.76 1320.4h1.14v-277.7h-1.14zM1590.88 1320.4h1.14v-321.87h-1.14zM1592 1320.4h1.14v-201.96h-1.14zM1593.12 1320.4h1.14v-252.45h-1.14zM1594.24 1320.4h1.14v-239.83h-1.14zM1595.36 1320.4h1.14v-195.65h-1.14zM1596.48 1320.4h1.14v-220.89h-1.14zM1597.6 1320.4h1.14v-347.12h-1.14zM1598.72 1320.4h1.14v-347.12h-1.14zM1599.84 1320.4h1.14v-366.05h-1.14zM1600.96 1320.4h1.14v-284.01h-1.14zM1602.09 1320.4h1.14v-220.89h-1.14zM1603.21 1320.4h1.14v-359.74h-1.14zM1604.33 1320.4h1.14v-252.45h-1.14zM1605.45 1320.4h1.14v-284.01h-1.14zM1606.57 1320.4h1.14v-284.01h-1.14zM1607.69 1320.4h1.14v-220.89h-1.14zM1608.81 1320.4h1.14v-201.96h-1.14zM1609.93 1320.4h1.14v-151.47h-1.14zM1611.05 1320.4h1.14v-145.16h-1.14zM1612.17 1320.4h1.14v-113.6h-1.14zM1613.29 1320.4h1.14v-126.23h-1.14zM1614.41 1320.4h1.14v-138.85h-1.14zM1615.53 1320.4h1.14v-113.6h-1.14zM1616.66 1320.4h1.14v-126.23h-1.14zM1617.78 1320.4h1.14v-119.91h-1.14zM1618.9 1320.4h1.14v-315.56h-1.14zM1620.02 1320.4h1.14v-290.32h-1.14zM1621.14 1320.4h1.14v-195.65h-1.14zM1622.26 1320.4h1.14v-277.7h-1.14zM1623.38 1320.4h1.14v-277.7h-1.14zM1624.5 1320.4h1.14v-277.7h-1.14zM1625.62 1320.4h1.14v-271.38h-1.14zM1626.74 1320.4h1.14v-252.45h-1.14zM1627.86 1320.4h1.14v-277.7h-1.14zM1628.98 1320.4h1.14v-271.38h-1.14zM1630.1 1320.4h1.14v-239.83h-1.14zM1631.23 1320.4h1.14v-372.36h-1.14zM1632.35 1320.4h1.14v-290.32h-1.14zM1633.47 1320.4h1.14v-315.56h-1.14zM1634.59 1320.4h1.14v-347.12h-1.14zM1635.71 1320.4h1.14v-239.83h-1.14zM1636.83 1320.4h1.14v-284.01h-1.14zM1637.95 1320.4h1.14v-100.98h-1.14zM1639.07 1320.4h1.14v-397.61h-1.14zM1640.19 1320.4h1.14v-334.5h-1.14zM1641.31 1320.4h1.14v-315.56h-1.14zM1642.43 1320.4h1.14v-410.23h-1.14zM1643.55 1320.4h1.14v-391.3h-1.14zM1644.67 1320.4h1.14v-265.07h-1.14zM1645.8 1320.4h1.14v-315.56h-1.14zM1646.92 1320.4h1.14v-315.56h-1.14zM1648.04 1320.4h1.14v-151.47h-1.14zM1649.16 1320.4h1.14v-94.67h-1.14zM1650.28 1320.4h1.14v-126.23h-1.14zM1651.4 1320.4h1.14v-107.29h-1.14zM1652.52 1320.4h1.14v-107.29h-1.14zM1653.64 1320.4h1.14v-94.67h-1.14zM1654.76 1320.4h1.14v-94.67h-1.14zM1655.88 1320.4h1.14v-100.98h-1.14zM1657 1320.4h1.14v-94.67h-1.14zM1658.12 1320.4h1.14v-94.67h-1.14zM1659.24 1320.4h1.14v-107.29h-1.14zM1660.37 1320.4h1.14v-100.98h-1.14zM1661.49 1320.4h1.14v-176.72h-1.14zM1662.61 1320.4h1.14v-176.72h-1.14zM1663.73 1320.4h1.14v-315.56h-1.14zM1664.85 1320.4h1.14v-176.72h-1.14zM1665.97 1320.4h1.14v-157.78h-1.14zM1667.09 1320.4h1.14v-151.47h-1.14zM1668.21 1320.4h1.14v-113.6h-1.14zM1669.33 1320.4h1.14v-138.85h-1.14zM1670.45 1320.4h1.14v-126.23h-1.14zM1671.57 1320.4h1.14v-113.6h-1.14zM1672.69 1320.4h1.14v-151.47h-1.14zM1673.81 1320.4h1.14v-113.6h-1.14zM1674.94 1320.4h1.14v-113.6h-1.14zM1850.89 1320.4h1.14v-69.42h-1.14zM1852.02 1320.4h1.14v-63.11h-1.14zM1853.14 1320.4h1.14v-63.11h-1.14zM1854.26 1320.4h1.14v-69.42h-1.14zM1855.38 1320.4h1.14v-69.42h-1.14zM1856.5 1320.4h1.14v-69.42h-1.14zM1857.62 1320.4h1.14v-75.74h-1.14zM1858.74 1320.4h1.14v-75.74h-1.14zM1859.86 1320.4h1.14v-82.05h-1.14zM1860.98 1320.4h1.14v-82.05h-1.14zM1862.1 1320.4h1.14v-88.36h-1.14zM1863.22 1320.4h1.14v-157.78h-1.14zM1864.34 1320.4h1.14v-309.25h-1.14zM1865.46 1320.4h1.14v-328.19h-1.14zM1866.59 1320.4h1.14v-284.01h-1.14zM1867.71 1320.4h1.14v-252.45h-1.14zM1868.83 1320.4h1.14v-214.58h-1.14zM1869.95 1320.4h1.14v-353.43h-1.14zM1871.07 1320.4h1.14v-334.5h-1.14zM1872.19 1320.4h1.14v-315.56h-1.14zM1873.31 1320.4h1.14v-290.32h-1.14zM1874.43 1320.4h1.14v-315.56h-1.14zM1875.55 1320.4h1.14v-277.7h-1.14zM1876.67 1320.4h1.14v-347.12h-1.14zM1877.79 1320.4h1.14v-347.12h-1.14zM1878.91 1320.4h1.14v-315.56h-1.14zM1880.03 1320.4h1.14v-359.74h-1.14zM1881.16 1320.4h1.14v-296.63h-1.14zM1882.28 1320.4h1.14v-321.87h-1.14zM1883.4 1320.4h1.14v-277.7h-1.14zM1884.52 1320.4h1.14v-302.94h-1.14zM1885.64 1320.4h1.14v-170.4h-1.14zM1886.76 1320.4h1.14v-126.23h-1.14zM1887.88 1320.4h1.14v-252.45h-1.14zM1889 1320.4h1.14v-315.56h-1.14zM1890.12 1320.4h1.14v-397.61h-1.14zM1891.24 1320.4h1.14v-302.94h-1.14zM1892.36 1320.4h1.14v-328.19h-1.14zM1893.48 1320.4h1.14v-315.56h-1.14zM1894.6 1320.4h1.14v-189.34h-1.14zM1895.73 1320.4h1.14v-145.16h-1.14zM1896.85 1320.4h1.14v-347.12h-1.14zM1897.97 1320.4h1.14v-252.45h-1.14zM1899.09 1320.4h1.14v-302.94h-1.14zM1900.21 1320.4h1.14v-290.32h-1.14zM1901.33 1320.4h1.14v-252.45h-1.14zM1902.45 1320.4h1.14v-214.58h-1.14zM1903.57 1320.4h1.14v-138.85h-1.14zM1904.69 1320.4h1.14v-258.76h-1.14zM1905.81 1320.4h1.14v-296.63h-1.14zM1906.93 1320.4h1.14v-220.89h-1.14zM1908.05 1320.4h1.14v-126.23h-1.14zM1909.17 1320.4h1.14v-113.6h-1.14zM1910.3 1320.4h1.14v-100.98h-1.14zM1911.42 1320.4h1.14v-145.16h-1.14zM1912.54 1320.4h1.14v-94.67h-1.14zM1913.66 1320.4h1.14v-126.23h-1.14zM1914.78 1320.4h1.14v-176.72h-1.14zM1915.9 1320.4h1.14v-284.01h-1.14zM1917.02 1320.4h1.14v-384.99h-1.14zM1918.14 1320.4h1.14v-372.36h-1.14zM1919.26 1320.4h1.14v-328.19h-1.14zM1920.38 1320.4h1.14v-164.09h-1.14zM1921.5 1320.4h1.14v-220.89h-1.14zM1922.62 1320.4h1.14v-189.34h-1.14zM1923.74 1320.4h1.14v-126.23h-1.14zM1924.87 1320.4h1.14v-157.78h-1.14zM1925.99 1320.4h1.14v-214.58h-1.14zM1927.11 1320.4h1.14v-227.21h-1.14zM1928.23 1320.4h1.14v-138.85h-1.14zM1929.35 1320.4h1.14v-176.72h-1.14zM1930.47 1320.4h1.14v-138.85h-1.14zM1931.59 1320.4h1.14v-113.6h-1.14zM1932.71 1320.4h1.14v-145.16h-1.14zM1933.83 1320.4h1.14v-126.23h-1.14zM1934.95 1320.4h1.14v-132.54h-1.14zM1936.07 1320.4h1.14v-107.29h-1.14zM1937.19 1320.4h1.14v-126.23h-1.14zM1938.31 1320.4h1.14v-113.6h-1.14zM1939.44 1320.4h1.14v-258.76h-1.14zM1940.56 1320.4h1.14v-334.5h-1.14zM1941.68 1320.4h1.14v-353.43h-1.14zM1942.8 1320.4h1.14v-284.01h-1.14zM1943.92 1320.4h1.14v-170.4h-1.14zM1945.04 1320.4h1.14v-195.65h-1.14zM1946.16 1320.4h1.14v-94.67h-1.14zM1947.28 1320.4h1.14v-157.78h-1.14zM1948.4 1320.4h1.14v-296.63h-1.14zM1949.52 1320.4h1.14v-353.43h-1.14zM1950.64 1320.4h1.14v-252.45h-1.14zM1951.76 1320.4h1.14v-315.56h-1.14zM1952.88 1320.4h1.14v-170.4h-1.14zM1954.01 1320.4h1.14v-113.6h-1.14zM1955.13 1320.4h1.14v-138.85h-1.14zM1956.25 1320.4h1.14v-132.54h-1.14zM1957.37 1320.4h1.14v-208.27h-1.14zM1958.49 1320.4h1.14v-195.65h-1.14zM1959.61 1320.4h1.14v-88.36h-1.14zM1960.73 1320.4h1.14v-94.67h-1.14zM1961.85 1320.4h1.14v-113.6h-1.14zM1962.97 1320.4h1.14v-94.67h-1.14zM1964.09 1320.4h1.14v-277.7h-1.14zM1965.21 1320.4h1.14v-321.87h-1.14zM1966.33 1320.4h1.14v-195.65h-1.14zM1967.45 1320.4h1.14v-151.47h-1.14zM1968.58 1320.4h1.14v-113.6h-1.14zM1969.7 1320.4h1.14v-138.85h-1.14zM1970.82 1320.4h1.14v-132.54h-1.14zM1971.94 1320.4h1.14v-189.34h-1.14zM1973.06 1320.4h1.14v-164.09h-1.14zM1974.18 1320.4h1.14v-151.47h-1.14zM1975.3 1320.4h1.14v-145.16h-1.14zM1976.42 1320.4h1.14v-126.23h-1.14zM1977.54 1320.4h1.14v-138.85h-1.14zM1978.66 1320.4h1.14v-126.23h-1.14zM1979.78 1320.4h1.14v-119.91h-1.14zM1980.9 1320.4h1.14v-107.29h-1.14zM1982.02 1320.4h1.14v-113.6h-1.14zM1983.15 1320.4h1.14v-119.91h-1.14zM1984.27 1320.4h1.14v-107.29h-1.14zM1985.39 1320.4h1.14v-107.29h-1.14zM1986.51 1320.4h1.14v-94.67h-1.14zM1987.63 1320.4h1.14v-88.36h-1.14zM1988.75 1320.4h1.14v-100.98h-1.14zM1989.87 1320.4h1.14v-100.98h-1.14zM1990.99 1320.4h1.14v-88.36h-1.14zM1992.11 1320.4h1.14v-94.67h-1.14zM1993.23 1320.4h1.14v-88.36h-1.14zM1994.35 1320.4h1.14v-100.98h-1.14zM1995.47 1320.4h1.14v-94.67h-1.14zM1996.59 1320.4h1.14v-88.36h-1.14zM1997.72 1320.4h1.14v-94.67h-1.14zM2173.68 1320.4h1.14v-63.11h-1.14zM2174.8 1320.4h1.14v-50.49h-1.14zM2175.92 1320.4h1.14v-50.49h-1.14zM2177.04 1320.4h1.14v-56.8h-1.14zM2178.16 1320.4h1.14v-56.8h-1.14zM2179.28 1320.4h1.14v-50.49h-1.14zM2180.4 1320.4h1.14v-63.11h-1.14zM2181.52 1320.4h1.14v-56.8h-1.14zM2182.64 1320.4h1.14v-126.23h-1.14zM2183.76 1320.4h1.14v-107.29h-1.14zM2184.88 1320.4h1.14v-138.85h-1.14zM2186 1320.4h1.14v-138.85h-1.14zM2187.12 1320.4h1.14v-138.85h-1.14zM2188.24 1320.4h1.14v-176.72h-1.14zM2189.37 1320.4h1.14v-271.38h-1.14zM2190.49 1320.4h1.14v-334.5h-1.14zM2191.61 1320.4h1.14v-302.94h-1.14zM2192.73 1320.4h1.14v-315.56h-1.14zM2193.85 1320.4h1.14v-397.61h-1.14zM2194.97 1320.4h1.14v-340.81h-1.14zM2196.09 1320.4h1.14v-315.56h-1.14zM2197.21 1320.4h1.14v-328.19h-1.14zM2198.33 1320.4h1.14v-315.56h-1.14zM2199.45 1320.4h1.14v-284.01h-1.14zM2200.57 1320.4h1.14v-233.52h-1.14zM2201.69 1320.4h1.14v-164.09h-1.14zM2202.81 1320.4h1.14v-189.34h-1.14zM2203.94 1320.4h1.14v-189.34h-1.14zM2205.06 1320.4h1.14v-378.68h-1.14zM2206.18 1320.4h1.14v-309.25h-1.14zM2207.3 1320.4h1.14v-284.01h-1.14zM2208.42 1320.4h1.14v-258.76h-1.14zM2209.54 1320.4h1.14v-214.58h-1.14zM2210.66 1320.4h1.14v-239.83h-1.14zM2211.78 1320.4h1.14v-195.65h-1.14zM2212.9 1320.4h1.14v-220.89h-1.14zM2214.02 1320.4h1.14v-227.21h-1.14zM2215.14 1320.4h1.14v-189.34h-1.14zM2216.26 1320.4h1.14v-214.58h-1.14zM2217.38 1320.4h1.14v-328.19h-1.14zM2218.51 1320.4h1.14v-246.14h-1.14zM2219.63 1320.4h1.14v-284.01h-1.14zM2220.75 1320.4h1.14v-126.23h-1.14zM2221.87 1320.4h1.14v-157.78h-1.14zM2222.99 1320.4h1.14v-138.85h-1.14zM2224.11 1320.4h1.14v-195.65h-1.14zM2225.23 1320.4h1.14v-340.81h-1.14zM2226.35 1320.4h1.14v-284.01h-1.14zM2227.47 1320.4h1.14v-359.74h-1.14zM2228.59 1320.4h1.14v-328.19h-1.14zM2229.71 1320.4h1.14v-302.94h-1.14zM2230.83 1320.4h1.14v-302.94h-1.14zM2231.95 1320.4h1.14v-189.34h-1.14zM2233.08 1320.4h1.14v-189.34h-1.14zM2234.2 1320.4h1.14v-157.78h-1.14zM2235.32 1320.4h1.14v-176.72h-1.14zM2236.44 1320.4h1.14v-157.78h-1.14zM2237.56 1320.4h1.14v-170.4h-1.14zM2238.68 1320.4h1.14v-138.85h-1.14zM2239.8 1320.4h1.14v-107.29h-1.14zM2240.92 1320.4h1.14v-157.78h-1.14zM2242.04 1320.4h1.14v-132.54h-1.14zM2243.16 1320.4h1.14v-183.03h-1.14zM2244.28 1320.4h1.14v-157.78h-1.14zM2245.4 1320.4h1.14v-176.72h-1.14zM2246.52 1320.4h1.14v-138.85h-1.14zM2247.65 1320.4h1.14v-176.72h-1.14zM2248.77 1320.4h1.14v-183.03h-1.14zM2249.89 1320.4h1.14v-145.16h-1.14zM2251.01 1320.4h1.14v-164.09h-1.14zM2252.13 1320.4h1.14v-183.03h-1.14zM2253.25 1320.4h1.14v-138.85h-1.14zM2254.37 1320.4h1.14v-138.85h-1.14zM2255.49 1320.4h1.14v-132.54h-1.14zM2256.61 1320.4h1.14v-132.54h-1.14zM2257.73 1320.4h1.14v-126.23h-1.14zM2258.85 1320.4h1.14v-107.29h-1.14zM2259.97 1320.4h1.14v-138.85h-1.14zM2261.09 1320.4h1.14v-126.23h-1.14zM2262.22 1320.4h1.14v-328.19h-1.14zM2263.34 1320.4h1.14v-391.3h-1.14zM2264.46 1320.4h1.14v-315.56h-1.14zM2265.58 1320.4h1.14v-372.36h-1.14zM2266.7 1320.4h1.14v-271.38h-1.14zM2267.82 1320.4h1.14v-252.45h-1.14zM2268.94 1320.4h1.14v-239.83h-1.14zM2270.06 1320.4h1.14v-157.78h-1.14zM2271.18 1320.4h1.14v-126.23h-1.14zM2272.3 1320.4h1.14v-138.85h-1.14zM2273.42 1320.4h1.14v-189.34h-1.14zM2274.54 1320.4h1.14v-126.23h-1.14zM2275.66 1320.4h1.14v-164.09h-1.14zM2276.79 1320.4h1.14v-138.85h-1.14zM2277.91 1320.4h1.14v-126.23h-1.14zM2279.03 1320.4h1.14v-132.54h-1.14zM2280.15 1320.4h1.14v-328.19h-1.14zM2281.27 1320.4h1.14v-126.23h-1.14zM2282.39 1320.4h1.14v-189.34h-1.14zM2283.51 1320.4h1.14v-492.28h-1.14zM2284.63 1320.4h1.14v-435.48h-1.14zM2285.75 1320.4h1.14v-315.56h-1.14zM2286.87 1320.4h1.14v-315.56h-1.14zM2287.99 1320.4h1.14v-239.83h-1.14zM2289.11 1320.4h1.14v-233.52h-1.14zM2290.23 1320.4h1.14v-138.85h-1.14zM2291.36 1320.4h1.14v-126.23h-1.14zM2292.48 1320.4h1.14v-107.29h-1.14zM2293.6 1320.4h1.14v-126.23h-1.14zM2294.72 1320.4h1.14v-113.6h-1.14zM2295.84 1320.4h1.14v-107.29h-1.14zM2296.96 1320.4h1.14v-164.09h-1.14zM2298.08 1320.4h1.14v-170.4h-1.14zM2299.2 1320.4h1.14v-157.78h-1.14zM2300.32 1320.4h1.14v-151.47h-1.14zM2301.44 1320.4h1.14v-252.45h-1.14zM2302.56 1320.4h1.14v-189.34h-1.14zM2303.68 1320.4h1.14v-164.09h-1.14zM2304.8 1320.4h1.14v-164.09h-1.14zM2305.93 1320.4h1.14v-100.98h-1.14zM2307.05 1320.4h1.14v-107.29h-1.14zM2308.17 1320.4h1.14v-100.98h-1.14zM2309.29 1320.4h1.14v-107.29h-1.14zM2310.41 1320.4h1.14v-100.98h-1.14zM2311.53 1320.4h1.14v-107.29h-1.14zM2312.65 1320.4h1.14v-107.29h-1.14zM2313.77 1320.4h1.14v-100.98h-1.14zM2314.89 1320.4h1.14v-113.6h-1.14zM2316.01 1320.4h1.14v-113.6h-1.14zM2317.13 1320.4h1.14v-107.29h-1.14zM2318.25 1320.4h1.14v-100.98h-1.14zM2319.37 1320.4h1.14v-107.29h-1.14zM2320.5 1320.4h1.14v-100.98h-1.14z" fill="#228f70"/>
</g>
<rect x="151.6" y="69.3" width="1.6" height="604.1" fill="#555"/>
<rect x="153.25" y="672.6" width="2247.6" height="1.4" fill="#6e6e6e"/>
<rect x="154" y="815.5" width="1.6" height="505.9" fill="#666"/>
<rect x="156.3" y="1320.6" width="2259.46" height="1.4" fill="#6e6e6e"/>
<path d="M141 672.4H152M141 597.01H152M141 521.62H152M141 446.24H152M141 370.85H152M141 295.46H152M141 220.07H152M141 144.69H152M141 69.3H152M153.25 673.4V684M246.9 673.4V684M340.55 673.4V684M434.2 673.4V684M527.85 673.4V684M621.5 673.4V684M715.15 673.4V684M808.8 673.4V684M902.45 673.4V684M996.1 673.4V684M1089.75 673.4V684M1183.4 673.4V684M1277.05 673.4V684M1370.7 673.4V684M1464.35 673.4V684M1558 673.4V684M1651.65 673.4V684M1745.3 673.4V684M1838.95 673.4V684M1932.6 673.4V684M2026.25 673.4V684M2119.9 673.4V684M2213.55 673.4V684M2307.2 673.4V684M2400.85 673.4V684" stroke="#a8a8a8" stroke-width="1.2" fill="none"/>
<text x="131" y="677.8" font-size="17.6" fill="#333" text-anchor="end" textLength="10.9" lengthAdjust="spacingAndGlyphs">0</text>
<text x="131" y="602.41" font-size="17.6" fill="#333" text-anchor="end" textLength="21.8" lengthAdjust="spacingAndGlyphs">10</text>
<text x="131" y="527.02" font-size="17.6" fill="#333" text-anchor="end" textLength="21.8" lengthAdjust="spacingAndGlyphs">20</text>
<text x="131" y="451.64" font-size="17.6" fill="#333" text-anchor="end" textLength="21.8" lengthAdjust="spacingAndGlyphs">30</text>
<text x="131" y="376.25" font-size="17.6" fill="#333" text-anchor="end" textLength="21.8" lengthAdjust="spacingAndGlyphs">40</text>
<text x="131" y="300.86" font-size="17.6" fill="#333" text-anchor="end" textLength="21.8" lengthAdjust="spacingAndGlyphs">50</text>
<text x="131" y="225.47" font-size="17.6" fill="#333" text-anchor="end" textLength="21.8" lengthAdjust="spacingAndGlyphs">60</text>
<text x="131" y="150.09" font-size="17.6" fill="#333" text-anchor="end" textLength="21.8" lengthAdjust="spacingAndGlyphs">70</text>
<text x="131" y="74.7" font-size="17.6" fill="#333" text-anchor="end" textLength="21.8" lengthAdjust="spacingAndGlyphs">80</text>
<text x="153.25" y="706.8" font-size="18.5" font-weight="700" fill="#000" text-anchor="middle">0h</text>
<text x="246.9" y="706.8" font-size="18.5" font-weight="700" fill="#000" text-anchor="middle">1h</text>
<text x="340.55" y="706.8" font-size="18.5" font-weight="700" fill="#000" text-anchor="middle">2h</text>
<text x="434.2" y="706.8" font-size="18.5" font-weight="700" fill="#000" text-anchor="middle">3h</text>
<text x="527.85" y="706.8" font-size="18.5" font-weight="700" fill="#000" text-anchor="middle">4h</text>
<text x="621.5" y="706.8" font-size="18.5" font-weight="700" fill="#000" text-anchor="middle">5h</text>
<text x="715.15" y="706.8" font-size="18.5" font-weight="700" fill="#000" text-anchor="middle">6h</text>
<text x="808.8" y="706.8" font-size="18.5" font-weight="700" fill="#000" text-anchor="middle">7h</text>
<text x="902.45" y="706.8" font-size="18.5" font-weight="700" fill="#000" text-anchor="middle">8h</text>
<text x="996.1" y="706.8" font-size="18.5" font-weight="700" fill="#000" text-anchor="middle">9h</text>
<text x="1089.75" y="706.8" font-size="18.5" font-weight="700" fill="#000" text-anchor="middle">10h</text>
<text x="1183.4" y="706.8" font-size="18.5" font-weight="700" fill="#000" text-anchor="middle">11h</text>
<text x="1277.05" y="706.8" font-size="18.5" font-weight="700" fill="#000" text-anchor="middle">12h</text>
<text x="1370.7" y="706.8" font-size="18.5" font-weight="700" fill="#000" text-anchor="middle">13h</text>
<text x="1464.35" y="706.8" font-size="18.5" font-weight="700" fill="#000" text-anchor="middle">14h</text>
<text x="1558" y="706.8" font-size="18.5" font-weight="700" fill="#000" text-anchor="middle">15h</text>
<text x="1651.65" y="706.8" font-size="18.5" font-weight="700" fill="#000" text-anchor="middle">16h</text>
<text x="1745.3" y="706.8" font-size="18.5" font-weight="700" fill="#000" text-anchor="middle">17h</text>
<text x="1838.95" y="706.8" font-size="18.5" font-weight="700" fill="#000" text-anchor="middle">18h</text>
<text x="1932.6" y="706.8" font-size="18.5" font-weight="700" fill="#000" text-anchor="middle">19h</text>
<text x="2026.25" y="706.8" font-size="18.5" font-weight="700" fill="#000" text-anchor="middle">20h</text>
<text x="2119.9" y="706.8" font-size="18.5" font-weight="700" fill="#000" text-anchor="middle">21h</text>
<text x="2213.55" y="706.8" font-size="18.5" font-weight="700" fill="#000" text-anchor="middle">22h</text>
<text x="2307.2" y="706.8" font-size="18.5" font-weight="700" fill="#000" text-anchor="middle">23h</text>
<text x="2400.85" y="706.8" font-size="18.5" font-weight="700" fill="#000" text-anchor="middle">0h</text>
<path d="M143.8 1320.4H154M143.8 1257.29H154M143.8 1194.18H154M143.8 1131.06H154M143.8 1067.95H154M143.8 1004.84H154M143.8 941.73H154M143.8 878.61H154M143.8 815.5H154M156.3 1321.4V1331M479.08 1321.4V1331M801.86 1321.4V1331M1124.64 1321.4V1331M1447.42 1321.4V1331M1770.2 1321.4V1331M2092.98 1321.4V1331" stroke="#a8a8a8" stroke-width="1.2" fill="none"/>
<text x="133" y="1327" font-size="20" fill="#333" text-anchor="end" textLength="11" lengthAdjust="spacingAndGlyphs">0</text>
<text x="133" y="1263.89" font-size="20" fill="#333" text-anchor="end" textLength="23.8" lengthAdjust="spacingAndGlyphs">10</text>
<text x="133" y="1200.78" font-size="20" fill="#333" text-anchor="end" textLength="23.8" lengthAdjust="spacingAndGlyphs">20</text>
<text x="133" y="1137.66" font-size="20" fill="#333" text-anchor="end" textLength="23.8" lengthAdjust="spacingAndGlyphs">30</text>
<text x="133" y="1074.55" font-size="20" fill="#333" text-anchor="end" textLength="23.8" lengthAdjust="spacingAndGlyphs">40</text>
<text x="133" y="1011.44" font-size="20" fill="#333" text-anchor="end" textLength="23.8" lengthAdjust="spacingAndGlyphs">50</text>
<text x="133" y="948.33" font-size="20" fill="#333" text-anchor="end" textLength="23.8" lengthAdjust="spacingAndGlyphs">60</text>
<text x="133" y="885.21" font-size="20" fill="#333" text-anchor="end" textLength="23.8" lengthAdjust="spacingAndGlyphs">70</text>
<text x="133" y="822.1" font-size="20" fill="#333" text-anchor="end" textLength="23.8" lengthAdjust="spacingAndGlyphs">80</text>
<text x="155.4" y="1357.2" font-size="21" fill="#111" text-anchor="middle" textLength="80.7" lengthAdjust="spacingAndGlyphs">sam. 24</text>
<text x="478.5" y="1357.2" font-size="21" fill="#111" text-anchor="middle" textLength="76.1" lengthAdjust="spacingAndGlyphs">dim. 25</text>
<text x="801.8" y="1357.2" font-size="21" fill="#111" text-anchor="middle" textLength="69.2" lengthAdjust="spacingAndGlyphs">lun. 26</text>
<text x="1124.4" y="1357.2" font-size="21" fill="#111" text-anchor="middle" textLength="76.7" lengthAdjust="spacingAndGlyphs">mar. 27</text>
<text x="1447" y="1357.2" font-size="21" fill="#111" text-anchor="middle" textLength="75.3" lengthAdjust="spacingAndGlyphs">mer. 28</text>
<text x="1769.4" y="1357.2" font-size="21" fill="#111" text-anchor="middle" textLength="70.1" lengthAdjust="spacingAndGlyphs">jeu. 29</text>
<text x="2093.5" y="1357.2" font-size="21" fill="#111" text-anchor="middle" textLength="74.4" lengthAdjust="spacingAndGlyphs">ven. 30</text>
<text transform="translate(86,370) rotate(-90)" font-size="22" fill="#333" text-anchor="middle" textLength="29.5" lengthAdjust="spacingAndGlyphs">kW</text>
<text transform="translate(86,1067.2) rotate(-90)" font-size="22" fill="#333" text-anchor="middle" textLength="29.5" lengthAdjust="spacingAndGlyphs">kW</text>
<rect x="1047.5" y="542.5" width="522.5" height="68.8" rx="9" fill="#fff" fill-opacity="0.89"/>
<text x="1126" y="588.8" font-size="30" font-weight="700" fill="#0a0a0a" textLength="376.4" lengthAdjust="spacingAndGlyphs">vendredi 30 janvier 2026</text>
<clipPath id="tsc"><rect x="2405.2" y="40" width="20" height="57"/></clipPath>
<g clip-path="url(#tsc)"><rect x="1994" y="66" width="414" height="31" rx="5" fill="#000" opacity="0.42" filter="url(#sh2)"/></g>
<path d="M1990 48 H2405.2 V91.5 Q2405.2 96.5 2400.2 96.5 H1990 Z" fill="#fff"/>
<text x="2111.9" y="88.9" font-size="24.5" font-weight="700" fill="#000" textLength="173" lengthAdjust="spacingAndGlyphs">LHB-site-L00K</text>
<rect x="1992.4" y="108.2" width="411.2" height="57.6" rx="9" fill="#fff" stroke="#7a7a7a" stroke-width="3.8"/>
<text x="2052.4" y="147.5" font-size="26.5" fill="#000" textLength="310.5" lengthAdjust="spacingAndGlyphs" xml:space="preserve">Consommation: 433 kWh</text>
<rect x="1992.4" y="178.2" width="411.2" height="56.6" rx="9" fill="#fff" stroke="#7a7a7a" stroke-width="3.8"/>
<text x="2114.2" y="218.6" font-size="26.5" fill="#000" textLength="187.7" lengthAdjust="spacingAndGlyphs" xml:space="preserve">P Max :  78 kW</text>
<rect x="1992.4" y="248.6" width="411.2" height="56.5" rx="9" fill="#fff" stroke="#7a7a7a" stroke-width="3.8"/>
<text x="2128.7" y="288.2" font-size="26.5" fill="#000" textLength="158.7" lengthAdjust="spacingAndGlyphs" xml:space="preserve">P min : 5 kW</text>
<rect x="562.1" y="806.6" width="411" height="56.6" rx="9" fill="#fff" stroke="#7a7a7a" stroke-width="3.8"/>
<text x="610.5" y="845.9" font-size="26.5" fill="#000" textLength="334.3" lengthAdjust="spacingAndGlyphs" xml:space="preserve">Consommation: 2 291 kWh</text>
<rect x="1100.2" y="806.9" width="410.9" height="56" rx="9" fill="#fff" stroke="#7a7a7a" stroke-width="3.8"/>
<text x="1222.2" y="846" font-size="26.5" fill="#000" textLength="187.3" lengthAdjust="spacingAndGlyphs" xml:space="preserve">P Max :  78 kW</text>
<rect x="1610.6" y="806.9" width="410.9" height="56" rx="9" fill="#fff" stroke="#7a7a7a" stroke-width="3.8"/>
<text x="1747" y="846" font-size="26.5" fill="#000" textLength="158.7" lengthAdjust="spacingAndGlyphs" xml:space="preserve">P min : 4 kW</text>
<rect x="176.5" y="49" width="481.5" height="77.6" fill="#0a0a18"/>
<linearGradient id="eco2" gradientUnits="userSpaceOnUse" x1="0" y1="77" x2="0" y2="112"><stop offset="0" stop-color="#00f2c9"/><stop offset="0.52" stop-color="#00f2c9"/><stop offset="0.52" stop-color="#00c0a0"/><stop offset="1" stop-color="#00c0a0"/></linearGradient>
<g fill="none" stroke="url(#eco2)" stroke-width="6.4" stroke-linecap="round" stroke-linejoin="round">
<path d="M191.6 95.5 H210.6 A9.5 12 0 1 0 207.6 104.8"/>
<path d="M236.6 87.6 A9 12 0 1 0 236.6 102.6"/>
<ellipse cx="257.2" cy="95" rx="10.2" ry="12"/>
</g>
<path d="M197.8 74.2 L206.2 71.2" stroke="#00f2c9" stroke-width="5.2" stroke-linecap="round"/>
<g fill="none" stroke="#fff" stroke-width="6.4" stroke-linecap="round" stroke-linejoin="round">
<path d="M275.6 83.5 L283.6 106.8 L291.6 85 L299.6 106.8 L314.2 67.5"/>
<path d="M317 86 Q325 77.5 335 83.5 Q335.6 85 335.6 88 V107"/>
<ellipse cx="324.4" cy="99.2" rx="8.4" ry="7.6"/>
<path d="M346.4 73 V101.5 Q346.4 107.5 352.4 107.5 M341 81.2 H353.6"/>
<path d="M361.8 73 V101.5 Q361.8 107.5 367.8 107.5 M356.4 81.2 H372.6"/>
</g>
<ellipse cx="433.8" cy="89" rx="25.8" ry="28" fill="#00b2e1"/>
<text x="418" y="96.5" font-size="23" fill="#fff" stroke="#00b2e1" stroke-width="0.4" textLength="32.5" lengthAdjust="spacingAndGlyphs">Rte</text>
<path d="M427.5 88.4 H447" stroke="#fff" stroke-width="1.6"/>
<g fill="#00a9dc" font-size="11.8">
<text x="468" y="79" textLength="48" lengthAdjust="spacingAndGlyphs">Le réseau</text>
<text x="468" y="92.2" textLength="61" lengthAdjust="spacingAndGlyphs">de transport</text>
<text x="468" y="104.9" textLength="57" lengthAdjust="spacingAndGlyphs">d’électricité</text>
</g>
<rect x="546.2" y="61.1" width="100.8" height="55.9" fill="#fff"/>
<rect x="553" y="68.5" width="8" height="6.9" fill="#2b3990"/><rect x="563.6" y="68.5" width="7.9" height="6.9" fill="#e1000f"/>
<text x="552.5" y="84.9" font-size="7.3" font-weight="700" fill="#222" textLength="44" lengthAdjust="spacingAndGlyphs">RÉPUBLIQUE</text>
<text x="552.5" y="92.6" font-size="7.3" font-weight="700" fill="#222" textLength="41" lengthAdjust="spacingAndGlyphs">FRANÇAISE</text>
<g font-size="4" font-style="italic" fill="#555"><text x="553" y="99.5">Liberté</text><text x="553" y="104">Égalité</text><text x="553" y="108.5">Fraternité</text></g>
<rect x="607" y="67" width="34.6" height="44.2" fill="none" stroke="#4a78c8" stroke-width="1.4"/>
<text x="611.6" y="74.8" font-size="6.5" font-weight="700" fill="#e2001a" textLength="25.3" lengthAdjust="spacingAndGlyphs">ADEME</text>
<circle cx="624.3" cy="87" r="8.4" fill="#1d4f9e"/><path d="M620 82 q3 2 2 5 q-1 3 2 5 M627 80 q-2 3 1 6" stroke="#8fb0e0" stroke-width="1.2" fill="none"/>
<g fill="#e2001a" opacity="0.55"><rect x="612" y="99.5" width="25" height="1.1"/><rect x="612" y="102.6" width="25" height="1.1"/><rect x="612" y="105.7" width="25" height="1.1"/></g>
<g fill="#dbdbdb">
<rect x="169.5" y="135.5" width="491" height="3.6"/>
<rect x="169.5" y="189.3" width="491" height="5"/>
<rect x="169.5" y="253.5" width="491" height="5"/>
<rect x="169.5" y="135.5" width="3.6" height="123"/>
<rect x="289.5" y="135.5" width="4.6" height="123"/>
<rect x="411.8" y="135.5" width="4.6" height="123"/>
<rect x="533.6" y="135.5" width="4.9" height="123"/>
<rect x="655.7" y="135.5" width="4.8" height="123"/>
</g>
<path d="M238.1 151 V167.5 C238.1 173.6 234.5 175.4 230.9 175.4 C227.3 175.4 224.9 173.6 223.7 169.6" stroke="#000" stroke-width="3.3" fill="none"/>
<path d="M327.5 151 V167.5 C327.5 173.6 323.9 175.4 320.3 175.4 C316.7 175.4 314.3 173.6 313.1 169.6" stroke="#000" stroke-width="3.3" fill="none"/>
<path d="M346.8 164.1 H360.8 M353.8 155.2 V172.8" stroke="#000" stroke-width="2.9" fill="none"/>
<path d="M387.8 151.5 V175.2 M380.8 158.6 L387.2 152.2" stroke="#000" stroke-width="3.1" fill="none"/>
<path d="M449.5 151 V167.5 C449.5 173.6 445.9 175.4 442.3 175.4 C438.7 175.4 436.3 173.6 435.1 169.6" stroke="#000" stroke-width="3.3" fill="none"/>
<path d="M468.9 164.1 H482.9 M475.9 155.2 V172.8" stroke="#000" stroke-width="2.9" fill="none"/>
<text x="500.3" y="175.2" font-size="33" font-weight="700" fill="#000" textLength="17" lengthAdjust="spacingAndGlyphs">2</text>
<path d="M571.5 151 V167.5 C571.5 173.6 567.9 175.4 564.3 175.4 C560.7 175.4 558.3 173.6 557.1 169.6" stroke="#000" stroke-width="3.3" fill="none"/>
<path d="M590.8 164.1 H604.8 M597.8 155.2 V172.8" stroke="#000" stroke-width="2.9" fill="none"/>
<text x="622.6" y="175.2" font-size="33" font-weight="700" fill="#000" textLength="17.2" lengthAdjust="spacingAndGlyphs">3</text>
<g transform="translate(180.2,195.2) scale(1,0.99)">
<rect x="0" y="0" width="106" height="55" fill="url(#wavebg)"/>
<path d="M14 0 C30 14 50 24 74 25 C88 25 98 21 106 17 L106 1 C98 7 88 11.5 74 11.5 C56 11.5 40 6 26 0 Z" fill="#00f0c8"/>
<path d="M26 0 C40 6 56 11.5 74 11.5 C88 11.5 98 7 106 1 L106 0 Z" fill="#00a38a"/>
</g>
<g transform="translate(301.9,196.2) scale(1,1.01)">
<rect x="0" y="0" width="106" height="55" fill="url(#wavebg)"/>
<path d="M14 0 C30 14 50 24 74 25 C88 25 98 21 106 17 L106 1 C98 7 88 11.5 74 11.5 C56 11.5 40 6 26 0 Z" fill="#00f0c8"/>
<path d="M26 0 C40 6 56 11.5 74 11.5 C88 11.5 98 7 106 1 L106 0 Z" fill="#00a38a"/>
</g>
<g transform="translate(424.2,196.2) scale(1,1.01)">
<rect x="0" y="0" width="106" height="55" fill="url(#wavebg)"/>
<path d="M14 0 C30 14 50 24 74 25 C88 25 98 21 106 17 L106 1 C98 7 88 11.5 74 11.5 C56 11.5 40 6 26 0 Z" fill="#00f0c8"/>
<path d="M26 0 C40 6 56 11.5 74 11.5 C88 11.5 98 7 106 1 L106 0 Z" fill="#00a38a"/>
</g>
<g transform="translate(544.3,196.2) scale(1,1.01)">
<rect x="0" y="0" width="106" height="55" fill="url(#wavebg)"/>
<path d="M14 0 C30 14 50 24 74 25 C88 25 98 21 106 17 L106 1 C98 7 88 11.5 74 11.5 C56 11.5 40 6 26 0 Z" fill="#00f0c8"/>
<path d="M26 0 C40 6 56 11.5 74 11.5 C88 11.5 98 7 106 1 L106 0 Z" fill="#00a38a"/>
</g>
<rect x="2322.4" y="1322.3" width="115.2" height="57.3" fill="#fff"/>
<g>
<path d="M2361.6 1342.2 A12.6 12.6 0 1 0 2361.8 1352.3 L2348.8 1352.3" stroke="#0570b8" stroke-width="5.2" fill="none" stroke-linecap="round"/>
<path d="M2370.4 1347 C2368 1343 2371 1340 2376 1340 C2382 1340 2384 1344.5 2382 1348 L2370.5 1361.6 L2385.5 1361.6" stroke="#0570b8" stroke-width="5" fill="none" stroke-linejoin="round"/>
<path d="M2391.7 1324.7 L2391.2 1335.9 L2399.8 1338.5 L2389.3 1362.9 L2394.6 1340.5 L2383.6 1338.3 Z" fill="#e85a24"/>
<text x="2393.6" y="1334.7" font-size="7.5" font-weight="700" fill="#e85a24" textLength="30" lengthAdjust="spacingAndGlyphs">FRANCE</text>
<g fill="#f39320"><path d="M2403.2 1339 H2424.4 L2418.4 1345 H2401 Z"/><path d="M2399.3 1348.1 H2418.2 L2413 1353.8 H2396.9 Z"/><path d="M2395.5 1357.2 H2416.8 L2410.8 1363.2 H2393.1 Z"/></g>
<text x="2340" y="1367.8" font-size="2.6" fill="#0570b8" textLength="73.7" lengthAdjust="spacingAndGlyphs">Optimisation des ressources énergétiques</text>
</g>
</svg></body></html>
